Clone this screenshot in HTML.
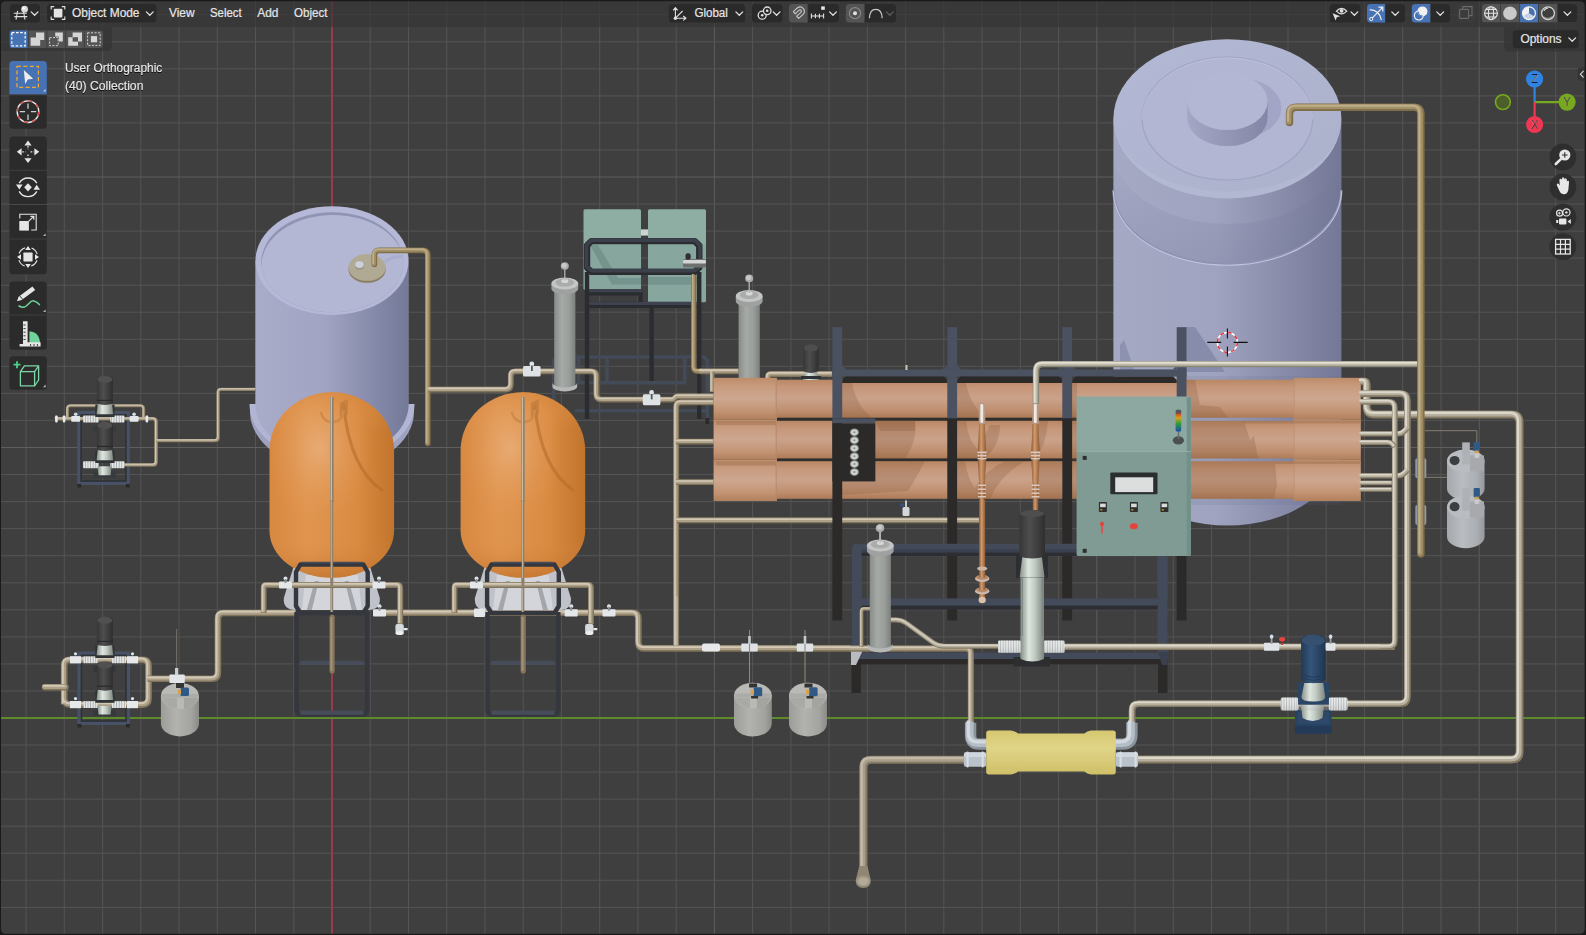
<!DOCTYPE html>
<html><head><meta charset="utf-8"><title>Blender viewport</title>
<style>
html,body{margin:0;padding:0;background:#3f3f3f;overflow:hidden}
svg{display:block}
text{font-family:"Liberation Sans",sans-serif;font-size:12px;fill:#e6e6e6;stroke:#e6e6e6;stroke-width:0.2px}
</style></head><body>
<svg width="1586" height="935" viewBox="0 0 1586 935">
<defs>
<linearGradient id="gBlueBody" x1="0" x2="1" y1="0" y2="0"><stop offset="0" stop-color="#a9acc9"/><stop offset="0.45" stop-color="#a1a4c2"/><stop offset="0.8" stop-color="#8488a8"/><stop offset="1" stop-color="#757998"/></linearGradient>
<linearGradient id="gBlueBody2" x1="0" x2="1" y1="0" y2="0"><stop offset="0" stop-color="#a5a9c4"/><stop offset="0.45" stop-color="#9fa3bf"/><stop offset="0.8" stop-color="#8488a6"/><stop offset="1" stop-color="#747896"/></linearGradient>
<linearGradient id="gBandAO" x1="0" x2="0" y1="0" y2="1"><stop offset="0" stop-color="#6a6e90" stop-opacity="0"/><stop offset="1" stop-color="#6a6e90" stop-opacity="0.22"/></linearGradient>
<linearGradient id="gBlueTop" x1="0" x2="1" y1="0" y2="1"><stop offset="0" stop-color="#b3b8d4"/><stop offset="1" stop-color="#abb0cb"/></linearGradient>
<linearGradient id="gHatchSide" x1="0" x2="1" y1="0" y2="0"><stop offset="0" stop-color="#a3a6c4"/><stop offset="0.6" stop-color="#9093b2"/><stop offset="1" stop-color="#8386a6"/></linearGradient>
<linearGradient id="gOrange" x1="0" x2="1" y1="0" y2="0"><stop offset="0" stop-color="#d88840"/><stop offset="0.3" stop-color="#e0954f"/><stop offset="0.7" stop-color="#da8b42"/><stop offset="1" stop-color="#c2742c"/></linearGradient>
<radialGradient id="gOrangeHi" cx="0.4" cy="0.3" r="0.42"><stop offset="0" stop-color="#ecb585" stop-opacity="0.7"/><stop offset="1" stop-color="#e39a56" stop-opacity="0"/></radialGradient>
<linearGradient id="gOrangeV" x1="0" x2="0" y1="0" y2="1"><stop offset="0" stop-color="#d48238" stop-opacity="0.5"/><stop offset="0.2" stop-color="#e39a56" stop-opacity="0"/><stop offset="0.8" stop-color="#d98a42" stop-opacity="0"/><stop offset="1" stop-color="#b96a24" stop-opacity="0.6"/></linearGradient>
<linearGradient id="gTube" x1="0" x2="0" y1="0" y2="1"><stop offset="0" stop-color="#b98763"/><stop offset="0.2" stop-color="#c6977a"/><stop offset="0.5" stop-color="#caa28a"/><stop offset="0.8" stop-color="#c09070"/><stop offset="1" stop-color="#ae7b58"/></linearGradient>
<linearGradient id="gTubeCap" x1="0" x2="0" y1="0" y2="1"><stop offset="0" stop-color="#bd8c68"/><stop offset="0.2" stop-color="#c89b7e"/><stop offset="0.5" stop-color="#cda790"/><stop offset="0.8" stop-color="#c39473"/><stop offset="1" stop-color="#b17f5c"/></linearGradient>
<linearGradient id="gFilter" x1="0" x2="1" y1="0" y2="0"><stop offset="0" stop-color="#888c88"/><stop offset="0.35" stop-color="#a6aaa6"/><stop offset="0.7" stop-color="#9a9e9a"/><stop offset="1" stop-color="#7c807c"/></linearGradient>
<linearGradient id="gSmallTank" x1="0" x2="1" y1="0" y2="0"><stop offset="0" stop-color="#9c9c98"/><stop offset="0.4" stop-color="#b2b2ae"/><stop offset="0.8" stop-color="#a3a39f"/><stop offset="1" stop-color="#8a8a86"/></linearGradient>
<linearGradient id="gSmallTankB" x1="0" x2="1" y1="0" y2="0"><stop offset="0" stop-color="#a4a7ac"/><stop offset="0.4" stop-color="#b9bcc1"/><stop offset="0.8" stop-color="#aaadb2"/><stop offset="1" stop-color="#94979c"/></linearGradient>
<linearGradient id="gMotor" x1="0" x2="1" y1="0" y2="0"><stop offset="0" stop-color="#363636"/><stop offset="0.4" stop-color="#4e4e4e"/><stop offset="1" stop-color="#2f2f2f"/></linearGradient>
<linearGradient id="gBlueMotor" x1="0" x2="1" y1="0" y2="0"><stop offset="0" stop-color="#223a56"/><stop offset="0.4" stop-color="#35557a"/><stop offset="1" stop-color="#1f3550"/></linearGradient>
<linearGradient id="gCone" x1="0" x2="1" y1="0" y2="0"><stop offset="0" stop-color="#868f88"/><stop offset="0.35" stop-color="#dfe6e0"/><stop offset="0.6" stop-color="#c3cbc5"/><stop offset="1" stop-color="#7c857e"/></linearGradient>
<linearGradient id="gFlex" x1="0" x2="0" y1="0" y2="1"><stop offset="0" stop-color="#f2f2f2"/><stop offset="0.5" stop-color="#d9dcdc"/><stop offset="1" stop-color="#a9adad"/></linearGradient>
<linearGradient id="gYellow" x1="0" x2="0" y1="0" y2="1"><stop offset="0" stop-color="#d6c870"/><stop offset="0.4" stop-color="#e0d488"/><stop offset="1" stop-color="#cfc068"/></linearGradient>
<linearGradient id="gCopper" x1="0" x2="1" y1="0" y2="0"><stop offset="0" stop-color="#8a5a34"/><stop offset="0.4" stop-color="#d29a6c"/><stop offset="1" stop-color="#8a5a34"/></linearGradient>
<linearGradient id="gSignal" x1="0" x2="0" y1="0" y2="1"><stop offset="0" stop-color="#c2272b"/><stop offset="0.3" stop-color="#d9a21c"/><stop offset="0.6" stop-color="#2f9a3a"/><stop offset="1" stop-color="#1c4fb0"/></linearGradient>
<pattern id="ribs" width="2.6" height="10" patternUnits="userSpaceOnUse"><rect width="2.6" height="10" fill="#e4e6e6"/><rect x="1.8" width="0.8" height="10" fill="#a4a8a8"/></pattern>
</defs>
<rect x="0.0" y="0.0" width="1586.0" height="935.0" fill="#3f3f3f"/>
<g stroke-width="1" shape-rendering="auto"><line x1="26.1" y1="0" x2="26.1" y2="935" stroke="#545454"/><line x1="64.3" y1="0" x2="64.3" y2="935" stroke="#545454"/><line x1="102.6" y1="0" x2="102.6" y2="935" stroke="#545454"/><line x1="140.8" y1="0" x2="140.8" y2="935" stroke="#545454"/><line x1="179.0" y1="0" x2="179.0" y2="935" stroke="#545454"/><line x1="217.3" y1="0" x2="217.3" y2="935" stroke="#545454"/><line x1="255.5" y1="0" x2="255.5" y2="935" stroke="#545454"/><line x1="293.8" y1="0" x2="293.8" y2="935" stroke="#545454"/><line x1="370.2" y1="0" x2="370.2" y2="935" stroke="#545454"/><line x1="408.5" y1="0" x2="408.5" y2="935" stroke="#545454"/><line x1="446.7" y1="0" x2="446.7" y2="935" stroke="#545454"/><line x1="485.0" y1="0" x2="485.0" y2="935" stroke="#545454"/><line x1="523.2" y1="0" x2="523.2" y2="935" stroke="#545454"/><line x1="561.4" y1="0" x2="561.4" y2="935" stroke="#545454"/><line x1="599.7" y1="0" x2="599.7" y2="935" stroke="#545454"/><line x1="637.9" y1="0" x2="637.9" y2="935" stroke="#545454"/><line x1="676.2" y1="0" x2="676.2" y2="935" stroke="#545454"/><line x1="714.4" y1="0" x2="714.4" y2="935" stroke="#5e5e5e"/><line x1="752.6" y1="0" x2="752.6" y2="935" stroke="#545454"/><line x1="790.9" y1="0" x2="790.9" y2="935" stroke="#545454"/><line x1="829.1" y1="0" x2="829.1" y2="935" stroke="#545454"/><line x1="867.4" y1="0" x2="867.4" y2="935" stroke="#545454"/><line x1="905.6" y1="0" x2="905.6" y2="935" stroke="#545454"/><line x1="943.8" y1="0" x2="943.8" y2="935" stroke="#545454"/><line x1="982.1" y1="0" x2="982.1" y2="935" stroke="#545454"/><line x1="1020.3" y1="0" x2="1020.3" y2="935" stroke="#545454"/><line x1="1058.6" y1="0" x2="1058.6" y2="935" stroke="#545454"/><line x1="1096.8" y1="0" x2="1096.8" y2="935" stroke="#5e5e5e"/><line x1="1135.0" y1="0" x2="1135.0" y2="935" stroke="#545454"/><line x1="1173.3" y1="0" x2="1173.3" y2="935" stroke="#545454"/><line x1="1211.5" y1="0" x2="1211.5" y2="935" stroke="#545454"/><line x1="1249.8" y1="0" x2="1249.8" y2="935" stroke="#545454"/><line x1="1288.0" y1="0" x2="1288.0" y2="935" stroke="#545454"/><line x1="1326.2" y1="0" x2="1326.2" y2="935" stroke="#545454"/><line x1="1364.5" y1="0" x2="1364.5" y2="935" stroke="#545454"/><line x1="1402.7" y1="0" x2="1402.7" y2="935" stroke="#545454"/><line x1="1441.0" y1="0" x2="1441.0" y2="935" stroke="#545454"/><line x1="1479.2" y1="0" x2="1479.2" y2="935" stroke="#5e5e5e"/><line x1="1517.4" y1="0" x2="1517.4" y2="935" stroke="#545454"/><line x1="1555.7" y1="0" x2="1555.7" y2="935" stroke="#545454"/><line x1="0" y1="934.4" x2="1586" y2="934.4" stroke="#545454"/><line x1="0" y1="907.4" x2="1586" y2="907.4" stroke="#545454"/><line x1="0" y1="880.3" x2="1586" y2="880.3" stroke="#545454"/><line x1="0" y1="853.2" x2="1586" y2="853.2" stroke="#545454"/><line x1="0" y1="826.2" x2="1586" y2="826.2" stroke="#545454"/><line x1="0" y1="799.1" x2="1586" y2="799.1" stroke="#545454"/><line x1="0" y1="772.1" x2="1586" y2="772.1" stroke="#545454"/><line x1="0" y1="745.0" x2="1586" y2="745.0" stroke="#545454"/><line x1="0" y1="691.0" x2="1586" y2="691.0" stroke="#545454"/><line x1="0" y1="663.9" x2="1586" y2="663.9" stroke="#545454"/><line x1="0" y1="636.9" x2="1586" y2="636.9" stroke="#545454"/><line x1="0" y1="609.8" x2="1586" y2="609.8" stroke="#545454"/><line x1="0" y1="582.8" x2="1586" y2="582.8" stroke="#545454"/><line x1="0" y1="555.7" x2="1586" y2="555.7" stroke="#545454"/><line x1="0" y1="528.6" x2="1586" y2="528.6" stroke="#545454"/><line x1="0" y1="501.6" x2="1586" y2="501.6" stroke="#545454"/><line x1="0" y1="474.5" x2="1586" y2="474.5" stroke="#545454"/><line x1="0" y1="447.5" x2="1586" y2="447.5" stroke="#5e5e5e"/><line x1="0" y1="420.4" x2="1586" y2="420.4" stroke="#545454"/><line x1="0" y1="393.4" x2="1586" y2="393.4" stroke="#545454"/><line x1="0" y1="366.3" x2="1586" y2="366.3" stroke="#545454"/><line x1="0" y1="339.3" x2="1586" y2="339.3" stroke="#545454"/><line x1="0" y1="312.2" x2="1586" y2="312.2" stroke="#545454"/><line x1="0" y1="285.2" x2="1586" y2="285.2" stroke="#545454"/><line x1="0" y1="258.1" x2="1586" y2="258.1" stroke="#545454"/><line x1="0" y1="231.1" x2="1586" y2="231.1" stroke="#545454"/><line x1="0" y1="204.0" x2="1586" y2="204.0" stroke="#545454"/><line x1="0" y1="177.0" x2="1586" y2="177.0" stroke="#5e5e5e"/><line x1="0" y1="149.9" x2="1586" y2="149.9" stroke="#545454"/><line x1="0" y1="122.9" x2="1586" y2="122.9" stroke="#545454"/><line x1="0" y1="95.9" x2="1586" y2="95.9" stroke="#545454"/><line x1="0" y1="68.8" x2="1586" y2="68.8" stroke="#545454"/><line x1="0" y1="41.8" x2="1586" y2="41.8" stroke="#545454"/><line x1="0" y1="14.7" x2="1586" y2="14.7" stroke="#545454"/></g>
<line x1="332" y1="0" x2="332" y2="935" stroke="#9a3b4b" stroke-width="2"/>
<line x1="0" y1="718" x2="1586" y2="718" stroke="#5f8a2c" stroke-width="2"/>
<path d="M1113.4 118.8L1113.4 446.0A114.0 79.6 0 0 0 1341.4 446.0L1341.4 118.8Z" fill="url(#gBlueBody2)"/>
<path d="M1113.4 150A114.0 74 0 0 0 1341.4 150L1341.4 190A114.0 74 0 0 1 1113.4 190Z" fill="url(#gBandAO)"/>
<path d="M1113.4 190A114.0 74 0 0 0 1341.4 190" fill="none" stroke="#8f92b1" stroke-width="2.2"/>
<path d="M1113.4 191.2A114.0 74 0 0 0 1341.4 191.2" fill="none" stroke="#c2c5df" stroke-width="1.1"/>
<ellipse cx="1227.4" cy="118.8" rx="114.0" ry="79.6" fill="url(#gBlueTop)"/>
<path d="M1113.4 118.8A114.0 79.6 0 0 0 1341.4 118.8A114.0 72.6 0 0 1 1113.4 118.8Z" fill="#b6bad6" opacity="0.6"/>
<ellipse cx="1227.4" cy="118.5" rx="85.3" ry="61.5" fill="#b2b6d2" stroke="#a0a4c0" stroke-width="1.2"/>
<path d="M1142.1000000000001 119.5A85.3 61.5 0 0 1 1312.7 119.5" fill="none" stroke="#c0c3dd" stroke-width="1" opacity="0.7"/>
<ellipse cx="1239.4" cy="108.0" rx="42.0" ry="30.0" fill="#a2a5c6"/>
<path d="M1187.2 101.5L1187.2 117.5A40.2 28.6 0 0 0 1267.6000000000001 117.5L1267.6000000000001 101.5Z" fill="url(#gHatchSide)"/>
<ellipse cx="1227.4" cy="101.5" rx="40.2" ry="28.6" fill="#b3b7d3"/>
<path d="M1186 376L1341.5 376L1341.5 505L1186 505Z" fill="#5c6088" opacity="0.12"/>
<path d="M1186 327L1195 327L1225 372L1186 372Z" fill="#5c6088" opacity="0.35"/>
<path d="M1120 345L1124 340L1135 372L1120 372Z" fill="#5c6088" opacity="0.3"/>
<path d="M250 404L250 412A82 57 0 0 0 414 412L414 404Z" fill="#9ea1c0"/>
<path d="M250 404A82 57 0 0 0 414 404L408.7 404L255.4 404Z" fill="#b1b4d2"/>
<path d="M250 404A82 57 0 0 0 414 404" fill="none" stroke="#b9bcd8" stroke-width="1"/>
<path d="M255.4 261L255.4 404A76.6 54 0 0 0 408.7 404L408.7 261Z" fill="url(#gBlueBody)"/>
<ellipse cx="332.0" cy="260.6" rx="76.5" ry="54.3" fill="#b5b8d6"/>
<clipPath id="ltopclip"><ellipse cx="332.3" cy="262.2" rx="71" ry="50"/></clipPath>
<ellipse cx="332.3" cy="262.2" rx="71.0" ry="50.0" fill="#9094b4"/>
<g clip-path="url(#ltopclip)"><ellipse cx="333" cy="265.6" rx="71.5" ry="50.6" fill="#b3b7d4"/></g>
<ellipse cx="367.1" cy="269.4" rx="18.6" ry="13.4" fill="#8a7f62"/>
<ellipse cx="367.1" cy="267.4" rx="18.6" ry="13.4" fill="#b0a994"/>
<ellipse cx="359.4" cy="266.4" rx="4.2" ry="3.4" fill="#9c9686"/>
<ellipse cx="359.4" cy="264.6" rx="4.2" ry="3.4" fill="#ccd0da"/>
<path d="M385 262Q392 256 402 257" fill="none" stroke="#a5a9cc" stroke-width="3" opacity="0.7"/>
<path d="M374.4 264.5L374.4 255.4Q374.4 250.4 379.4 250.4L422.8 250.4Q427.8 250.4 427.8 255.4L427.8 443.5" fill="none" stroke="#7f6f4a" stroke-width="5.6" stroke-linecap="round" stroke-linejoin="round"/>
<path d="M374.4 264.5L374.4 255.4Q374.4 250.4 379.4 250.4L422.8 250.4Q427.8 250.4 427.8 255.4L427.8 443.5" fill="none" stroke="#a3916a" stroke-width="3.92" stroke-linecap="round" stroke-linejoin="round" transform="translate(-0.50,-0.50)"/>
<path d="M374.4 264.5L374.4 255.4Q374.4 250.4 379.4 250.4L422.8 250.4Q427.8 250.4 427.8 255.4L427.8 443.5" fill="none" stroke="#bfae88" stroke-width="1.57" stroke-linecap="round" stroke-linejoin="round" transform="translate(-1.12,-1.12)"/>
<rect x="78.8" y="412.6" width="49.400000000000006" height="70.8" fill="none" stroke="#485267" stroke-width="3.2"/>
<rect x="81.2" y="415" width="44.60000000000001" height="66" fill="none" stroke="#2e323a" stroke-width="1.6"/>
<rect x="77.2" y="484.0" width="4.0" height="3.5" fill="#2b2a29"/>
<rect x="125.8" y="484.0" width="4.0" height="3.5" fill="#2b2a29"/>
<path d="M67.5 419.0L67.5 408.8Q67.5 405.8 70.5 405.8L140.7 405.8Q143.7 405.8 143.7 408.8L143.7 419.0" fill="none" stroke="#80745d" stroke-width="3.0" stroke-linecap="butt" stroke-linejoin="round"/>
<path d="M67.5 419.0L67.5 408.8Q67.5 405.8 70.5 405.8L140.7 405.8Q143.7 405.8 143.7 408.8L143.7 419.0" fill="none" stroke="#ada089" stroke-width="2.10" stroke-linecap="butt" stroke-linejoin="round" transform="translate(-0.27,-0.27)"/>
<path d="M67.5 419.0L67.5 408.8Q67.5 405.8 70.5 405.8L140.7 405.8Q143.7 405.8 143.7 408.8L143.7 419.0" fill="none" stroke="#d2c8b5" stroke-width="0.84" stroke-linecap="butt" stroke-linejoin="round" transform="translate(-0.60,-0.60)"/>
<path d="M55.3 418.8L153.2 418.8Q156.2 418.8 156.2 421.8L156.2 462.0Q156.2 465.0 153.2 465.0L124.0 465.0" fill="none" stroke="#80745d" stroke-width="3.6" stroke-linecap="butt" stroke-linejoin="round"/>
<path d="M55.3 418.8L153.2 418.8Q156.2 418.8 156.2 421.8L156.2 462.0Q156.2 465.0 153.2 465.0L124.0 465.0" fill="none" stroke="#ada089" stroke-width="2.52" stroke-linecap="butt" stroke-linejoin="round" transform="translate(-0.32,-0.32)"/>
<path d="M55.3 418.8L153.2 418.8Q156.2 418.8 156.2 421.8L156.2 462.0Q156.2 465.0 153.2 465.0L124.0 465.0" fill="none" stroke="#d2c8b5" stroke-width="1.01" stroke-linecap="butt" stroke-linejoin="round" transform="translate(-0.72,-0.72)"/>
<path d="M156.2 440.6L215.2 440.6Q218.2 440.6 218.2 437.6L218.2 392.4Q218.2 389.4 221.2 389.4L256.0 389.4" fill="none" stroke="#80745d" stroke-width="3.4" stroke-linecap="butt" stroke-linejoin="round"/>
<path d="M156.2 440.6L215.2 440.6Q218.2 440.6 218.2 437.6L218.2 392.4Q218.2 389.4 221.2 389.4L256.0 389.4" fill="none" stroke="#ada089" stroke-width="2.38" stroke-linecap="butt" stroke-linejoin="round" transform="translate(-0.31,-0.31)"/>
<path d="M156.2 440.6L215.2 440.6Q218.2 440.6 218.2 437.6L218.2 392.4Q218.2 389.4 221.2 389.4L256.0 389.4" fill="none" stroke="#d2c8b5" stroke-width="0.95" stroke-linecap="butt" stroke-linejoin="round" transform="translate(-0.68,-0.68)"/>
<rect x="93.6" y="426.5" width="22.5" height="5.2" fill="#383b3e"/>
<rect x="93.6" y="471.4" width="22.5" height="6.4" fill="#383b3e"/>
<rect x="83.1" y="415.4" width="15.7" height="7.0" fill="url(#ribs)" rx="1"/>
<rect x="110.3" y="415.4" width="14.2" height="7.0" fill="url(#ribs)" rx="1"/>
<rect x="83.1" y="461.3" width="15.7" height="7.0" fill="url(#ribs)" rx="1"/>
<rect x="110.3" y="461.3" width="14.2" height="7.0" fill="url(#ribs)" rx="1"/>
<rect x="55.1" y="415.4" width="2.6" height="7.0" fill="#e8eaec" rx="0.8"/>
<rect x="62.8" y="415.4" width="2.6" height="7.0" fill="#e8eaec" rx="0.8"/>
<rect x="145.6" y="415.4" width="2.6" height="7.0" fill="#e8eaec" rx="0.8"/>
<rect x="71.2" y="416.0" width="9.0" height="5.8" fill="#e3e6ea" rx="1"/>
<ellipse cx="75.7" cy="414.2" rx="1.8" ry="1.8" fill="#d5dcec"/>
<rect x="129.6" y="416.0" width="9.0" height="5.8" fill="#e3e6ea" rx="1"/>
<ellipse cx="134.1" cy="414.2" rx="1.8" ry="1.8" fill="#d5dcec"/>
<rect x="95.3" y="404.6" width="19.2" height="12.4" fill="#303336"/>
<path d="M97.7 404.3L112.10000000000001 404.3L113.2 414.3L96.60000000000001 414.3Z" fill="url(#gCone)"/>
<path d="M96.9 379.8Q96.9 375.6 104.9 375.6Q112.9 375.6 112.9 379.8L112.9 403.3Q104.9 406.8 96.9 403.3Z" fill="url(#gMotor)"/>
<ellipse cx="104.9" cy="379.4" rx="7.4" ry="3.4" fill="#505050"/>
<rect x="96.9" y="399.8" width="16.0" height="1.2" fill="#2a2a2a"/>
<rect x="95.3" y="450.6" width="19.2" height="12.4" fill="#303336"/>
<path d="M97.7 450.3L112.10000000000001 450.3L113.2 460.3L96.60000000000001 460.3Z" fill="url(#gCone)"/>
<path d="M96.9 425.8Q96.9 421.6 104.9 421.6Q112.9 421.6 112.9 425.8L112.9 449.3Q104.9 452.8 96.9 449.3Z" fill="url(#gMotor)"/>
<ellipse cx="104.9" cy="425.4" rx="7.4" ry="3.4" fill="#505050"/>
<rect x="96.9" y="445.8" width="16.0" height="1.2" fill="#2a2a2a"/>
<path d="M97.5 466.3L111.6 466.3L110.6 475.3L98.5 475.3Z" fill="url(#gCone)"/>
<rect x="79.1" y="653.1" width="49.3" height="70.3" fill="none" stroke="#485267" stroke-width="3.2"/>
<rect x="81.5" y="655.5" width="44.5" height="65.5" fill="none" stroke="#2e323a" stroke-width="1.6"/>
<rect x="77.5" y="724.0" width="4.0" height="3.5" fill="#2b2a29"/>
<rect x="126.0" y="724.0" width="4.0" height="3.5" fill="#2b2a29"/>
<path d="M64.2 704.6L64.2 665.8Q64.2 659.8 70.2 659.8L142.6 659.8Q148.6 659.8 148.6 665.8L148.6 698.6Q148.6 704.6 142.6 704.6L70.2 704.6Q64.2 704.6 64.2 698.6L64.2 690.0" fill="none" stroke="#80745d" stroke-width="6.6" stroke-linecap="butt" stroke-linejoin="round"/>
<path d="M64.2 704.6L64.2 665.8Q64.2 659.8 70.2 659.8L142.6 659.8Q148.6 659.8 148.6 665.8L148.6 698.6Q148.6 704.6 142.6 704.6L70.2 704.6Q64.2 704.6 64.2 698.6L64.2 690.0" fill="none" stroke="#ada089" stroke-width="4.62" stroke-linecap="butt" stroke-linejoin="round" transform="translate(-0.59,-0.59)"/>
<path d="M64.2 704.6L64.2 665.8Q64.2 659.8 70.2 659.8L142.6 659.8Q148.6 659.8 148.6 665.8L148.6 698.6Q148.6 704.6 142.6 704.6L70.2 704.6Q64.2 704.6 64.2 698.6L64.2 690.0" fill="none" stroke="#d2c8b5" stroke-width="1.85" stroke-linecap="butt" stroke-linejoin="round" transform="translate(-1.32,-1.32)"/>
<path d="M45.0 687.2L65.5 687.2" fill="none" stroke="#80745d" stroke-width="6.6" stroke-linecap="round" stroke-linejoin="round"/>
<path d="M45.0 687.2L65.5 687.2" fill="none" stroke="#ada089" stroke-width="4.62" stroke-linecap="round" stroke-linejoin="round" transform="translate(-0.59,-0.59)"/>
<path d="M45.0 687.2L65.5 687.2" fill="none" stroke="#d2c8b5" stroke-width="1.85" stroke-linecap="round" stroke-linejoin="round" transform="translate(-1.32,-1.32)"/>
<path d="M147.5 678.8L211.9 678.8Q217.9 678.8 217.9 672.8L217.9 619.0Q217.9 613.0 223.9 613.0L296.0 613.0" fill="none" stroke="#80745d" stroke-width="6.6" stroke-linecap="butt" stroke-linejoin="round"/>
<path d="M147.5 678.8L211.9 678.8Q217.9 678.8 217.9 672.8L217.9 619.0Q217.9 613.0 223.9 613.0L296.0 613.0" fill="none" stroke="#ada089" stroke-width="4.62" stroke-linecap="butt" stroke-linejoin="round" transform="translate(-0.59,-0.59)"/>
<path d="M147.5 678.8L211.9 678.8Q217.9 678.8 217.9 672.8L217.9 619.0Q217.9 613.0 223.9 613.0L296.0 613.0" fill="none" stroke="#d2c8b5" stroke-width="1.85" stroke-linecap="butt" stroke-linejoin="round" transform="translate(-1.32,-1.32)"/>
<rect x="93.5" y="665.5" width="22.0" height="6.5" fill="#33373c"/>
<rect x="93.5" y="710.5" width="22.0" height="5.0" fill="#33373c"/>
<rect x="83.5" y="656.4" width="14.0" height="6.8" fill="url(#ribs)"/>
<rect x="112.0" y="656.4" width="14.0" height="6.8" fill="url(#ribs)"/>
<rect x="70.0" y="656.2" width="11.0" height="7.2" fill="#e6e8ea"/>
<rect x="127.0" y="656.2" width="11.0" height="7.2" fill="#e6e8ea"/>
<ellipse cx="75.5" cy="653.8" rx="1.6" ry="1.6" fill="#dfe3ea"/>
<ellipse cx="132.5" cy="653.8" rx="1.6" ry="1.6" fill="#dfe3ea"/>
<rect x="83.5" y="701.2" width="14.0" height="6.8" fill="url(#ribs)"/>
<rect x="112.0" y="701.2" width="14.0" height="6.8" fill="url(#ribs)"/>
<rect x="70.0" y="701.0" width="11.0" height="7.2" fill="#e6e8ea"/>
<rect x="127.0" y="701.0" width="11.0" height="7.2" fill="#e6e8ea"/>
<ellipse cx="75.5" cy="698.6" rx="1.6" ry="1.6" fill="#dfe3ea"/>
<ellipse cx="132.5" cy="698.6" rx="1.6" ry="1.6" fill="#dfe3ea"/>
<rect x="95.3" y="645.6" width="19.2" height="12.4" fill="#303336"/>
<path d="M97.7 645.3L112.10000000000001 645.3L113.2 655.3L96.60000000000001 655.3Z" fill="url(#gCone)"/>
<path d="M96.9 620.8Q96.9 616.5999999999999 104.9 616.5999999999999Q112.9 616.5999999999999 112.9 620.8L112.9 644.3Q104.9 647.8 96.9 644.3Z" fill="url(#gMotor)"/>
<ellipse cx="104.9" cy="620.4" rx="7.4" ry="3.4" fill="#505050"/>
<rect x="96.9" y="640.8" width="16.0" height="1.2" fill="#2a2a2a"/>
<rect x="95.3" y="690.4" width="19.2" height="12.4" fill="#303336"/>
<path d="M97.7 690.1L112.10000000000001 690.1L113.2 700.1L96.60000000000001 700.1Z" fill="url(#gCone)"/>
<path d="M96.9 665.6Q96.9 661.4 104.9 661.4Q112.9 661.4 112.9 665.6L112.9 689.1Q104.9 692.6 96.9 689.1Z" fill="url(#gMotor)"/>
<ellipse cx="104.9" cy="665.2" rx="7.4" ry="3.4" fill="#505050"/>
<rect x="96.9" y="685.6" width="16.0" height="1.2" fill="#2a2a2a"/>
<path d="M97.5 706L111.6 706L110.6 714.5L98.5 714.5Z" fill="url(#gCone)"/>
<path d="M160.9 695.954L160.9 723.446A19.049999999999997 12.953999999999999 0 0 0 199 723.446L199 695.954Z" fill="url(#gSmallTank)"/>
<ellipse cx="179.9" cy="696.0" rx="19.0" ry="13.0" fill="#b9b9b5"/>
<path d="M161.4 695.954A19.049999999999997 12.953999999999999 0 0 0 176.95 708.6080000000001L176.95 697.954L162.9 697.954Z" fill="#a9a9a5"/>
<path d="M183.95 697.8971L198 697.8971A19.049999999999997 12.953999999999999 0 0 1 183.95 708.908Z" fill="#9f9f9b" opacity="0.8"/>
<path d="M161.9 693.954L198 693.954L198 697.454L161.9 697.454Z" fill="#a5a5a1" opacity="0.7"/>
<line x1="176.6" y1="629" x2="176.6" y2="674" stroke="#77706a" stroke-width="1"/>
<rect x="169.4" y="674.5" width="15.4" height="8.5" fill="#e2e5e7" rx="1"/>
<rect x="175.0" y="668.0" width="3.2" height="7.0" fill="#c9ced2"/>
<rect x="176.0" y="683.0" width="8.0" height="5.0" fill="#333"/>
<rect x="180.5" y="687.5" width="8.5" height="8.5" fill="#2f5a86" rx="1.5"/>
<rect x="178.0" y="689.5" width="3.0" height="4.5" fill="#d9a24a"/>
<rect x="583.5" y="209.2" width="57.5" height="80.5" fill="#8eaea4" rx="1.5"/>
<rect x="648.0" y="209.2" width="58.0" height="93.0" fill="#8eaea4" rx="1.5"/>
<rect x="641.0" y="229.4" width="7.0" height="6.2" fill="#cfd2d0"/>
<path d="M590 245L598 245L618 278L641.2 278L641.2 284.5L612 284.5Z" fill="#5f8079" opacity="0.5"/>
<path d="M648 277L697 277L697 284.7L648 284.7Z" fill="#5f8079" opacity="0.5"/>
<path d="M589 244.3L641.2 244.3L641.2 289.2L589 289.2Z M648 244.3L705.8 244.3L705.8 302L648 302Z" fill="#6d8f87" opacity="0.22"/>
<g fill="none" stroke="#434a58" stroke-width="3.6" stroke-linejoin="round">
<path d="M553.8 414L553.8 360L557 357L704 357L707.2 360L707.2 420"/>
<path d="M578.5 357L578.5 382.7L684.7 382.7L684.7 357"/>
<path d="M607 357L607 382.7"/>
<path d="M575 410.8L707 410.8"/>
</g>
<rect x="705.4" y="418.0" width="3.8" height="6.0" fill="#2b2a29"/>
<g fill="none" stroke="#2b2c30" stroke-width="4.4" stroke-linejoin="round">
<path d="M587 419L587 272M699.2 419L699.2 272"/>
<path d="M640.5 292.4L640.5 305"/>
<path d="M651.6 306L651.6 381"/>
</g>
<g fill="none" stroke="#2b2c30" stroke-width="6.4" stroke-linejoin="round">
<path d="M589 292.4L642.6 292.4"/>
<path d="M589 304.9L697 304.9"/>
</g>
<g fill="none" stroke="#3d424e" stroke-width="3">
<path d="M589 290.7L642.6 290.7"/>
<path d="M589 303.4L697 303.4"/>
</g>
<path d="M591.5 241.1L694.7 241.1L699.3 245.6L699.3 267.4L694.7 271.9L591.5 271.9L587 267.4L587 245.6Z" fill="none" stroke="#2b2c30" stroke-width="6.4" stroke-linejoin="round"/>
<path d="M591.5 240.1L694.7 240.1L700 245.4L700 266.8L694.7 270.6L591.5 270.6L586.4 266.8L586.4 245.4Z" fill="none" stroke="#3b404b" stroke-width="3.6" stroke-linejoin="round"/>
<path d="M693.8 275.0L693.8 367.2Q693.8 371.3 697.9 371.3L702.0 371.3" fill="none" stroke="#7a6a48" stroke-width="5.4" stroke-linecap="butt" stroke-linejoin="round"/>
<path d="M693.8 275.0L693.8 367.2Q693.8 371.3 697.9 371.3L702.0 371.3" fill="none" stroke="#a08d66" stroke-width="3.78" stroke-linecap="butt" stroke-linejoin="round" transform="translate(-0.49,-0.49)"/>
<path d="M693.8 275.0L693.8 367.2Q693.8 371.3 697.9 371.3L702.0 371.3" fill="none" stroke="#bdac86" stroke-width="1.51" stroke-linecap="butt" stroke-linejoin="round" transform="translate(-1.08,-1.08)"/>
<rect x="683.0" y="259.0" width="23.0" height="8.4" fill="#6e706f" rx="1.5"/>
<rect x="683.0" y="260.0" width="23.0" height="3.6" fill="#d4d5d5" rx="1"/>
<rect x="685.5" y="253.3" width="5.2" height="6.4" fill="#2e2f33" rx="2.2"/>
<path d="M428.6 389.5L505.8 389.5Q510.8 389.5 510.8 384.5L510.8 376.3Q510.8 371.3 515.8 371.3L591.4 371.3Q596.4 371.3 596.4 376.3L596.4 394.6Q596.4 399.6 601.4 399.6L672.1 399.6Q674.0 399.6 675.0 398.0L675.0 398.0Q676.0 396.4 677.9 396.4L714.0 396.4" fill="none" stroke="#80745d" stroke-width="5.8" stroke-linecap="butt" stroke-linejoin="round"/>
<path d="M428.6 389.5L505.8 389.5Q510.8 389.5 510.8 384.5L510.8 376.3Q510.8 371.3 515.8 371.3L591.4 371.3Q596.4 371.3 596.4 376.3L596.4 394.6Q596.4 399.6 601.4 399.6L672.1 399.6Q674.0 399.6 675.0 398.0L675.0 398.0Q676.0 396.4 677.9 396.4L714.0 396.4" fill="none" stroke="#ada089" stroke-width="4.06" stroke-linecap="butt" stroke-linejoin="round" transform="translate(-0.52,-0.52)"/>
<path d="M428.6 389.5L505.8 389.5Q510.8 389.5 510.8 384.5L510.8 376.3Q510.8 371.3 515.8 371.3L591.4 371.3Q596.4 371.3 596.4 376.3L596.4 394.6Q596.4 399.6 601.4 399.6L672.1 399.6Q674.0 399.6 675.0 398.0L675.0 398.0Q676.0 396.4 677.9 396.4L714.0 396.4" fill="none" stroke="#d2c8b5" stroke-width="1.62" stroke-linecap="butt" stroke-linejoin="round" transform="translate(-1.16,-1.16)"/>
<path d="M700.0 371.3L739.0 371.3" fill="none" stroke="#80745d" stroke-width="5.8" stroke-linecap="butt" stroke-linejoin="round"/>
<path d="M700.0 371.3L739.0 371.3" fill="none" stroke="#ada089" stroke-width="4.06" stroke-linecap="butt" stroke-linejoin="round" transform="translate(-0.52,-0.52)"/>
<path d="M700.0 371.3L739.0 371.3" fill="none" stroke="#d2c8b5" stroke-width="1.62" stroke-linecap="butt" stroke-linejoin="round" transform="translate(-1.16,-1.16)"/>
<path d="M712.0 372.0L712.0 392.0" fill="none" stroke="#80745d" stroke-width="4.6" stroke-linecap="butt" stroke-linejoin="round"/>
<path d="M712.0 372.0L712.0 392.0" fill="none" stroke="#ada089" stroke-width="3.22" stroke-linecap="butt" stroke-linejoin="round" transform="translate(-0.41,-0.41)"/>
<path d="M712.0 372.0L712.0 392.0" fill="none" stroke="#d2c8b5" stroke-width="1.29" stroke-linecap="butt" stroke-linejoin="round" transform="translate(-0.92,-0.92)"/>
<path d="M768.0 381.0L768.0 377.5Q768.0 374.0 771.5 374.0L832.5 374.0" fill="none" stroke="#80745d" stroke-width="5.8" stroke-linecap="butt" stroke-linejoin="round"/>
<path d="M768.0 381.0L768.0 377.5Q768.0 374.0 771.5 374.0L832.5 374.0" fill="none" stroke="#ada089" stroke-width="4.06" stroke-linecap="butt" stroke-linejoin="round" transform="translate(-0.52,-0.52)"/>
<path d="M768.0 381.0L768.0 377.5Q768.0 374.0 771.5 374.0L832.5 374.0" fill="none" stroke="#d2c8b5" stroke-width="1.62" stroke-linecap="butt" stroke-linejoin="round" transform="translate(-1.16,-1.16)"/>
<rect x="523.0" y="366.0" width="17.6" height="10.6" fill="#dfe2e5" rx="1.5"/>
<ellipse cx="531.8" cy="364.0" rx="2.4" ry="2.4" fill="#dfe3ea"/>
<rect x="531.0" y="365.6" width="1.8" height="5.4" fill="#55595f"/>
<rect x="642.8" y="394.2" width="17.6" height="11.0" fill="#dfe2e5" rx="1.5"/>
<ellipse cx="651.6" cy="392.4" rx="2.4" ry="2.4" fill="#dfe3ea"/>
<rect x="650.8" y="394.0" width="1.8" height="5.4" fill="#55595f"/>
<path d="M554.1999999999999 284.6L554.1999999999999 386.5A10.6 4 0 0 0 575.4 386.5L575.4 284.6Z" fill="url(#gFilter)"/>
<path d="M552.4 382.5A12.4 5 0 0 0 577.1999999999999 382.5L577.1999999999999 386.5A12.4 5 0 0 1 552.4 386.5Z" fill="#b5b8b6"/>
<path d="M551.4 283.6L551.4 288.6A13.4 6 0 0 0 578.1999999999999 288.6L578.1999999999999 283.6Z" fill="#9ea19f"/>
<ellipse cx="564.8" cy="283.6" rx="13.4" ry="6.0" fill="#c3c6c4"/>
<ellipse cx="564.8" cy="282.6" rx="9.4" ry="4.0" fill="#a9acaa"/>
<ellipse cx="564.8" cy="281.1" rx="3.5" ry="2.0" fill="#d5d8d6"/>
<line x1="564.8" y1="269.6" x2="564.8" y2="280.6" stroke="#b9bcba" stroke-width="1.2"/>
<ellipse cx="564.8" cy="266.1" rx="4.0" ry="3.8" fill="#a9acaa"/>
<ellipse cx="564.2" cy="265.4" rx="2.6" ry="2.4" fill="#c6c9c7"/>
<path d="M738.6 296.9L738.6 382A10.6 4 0 0 0 759.8000000000001 382L759.8000000000001 296.9Z" fill="url(#gFilter)"/>
<path d="M735.8000000000001 295.9L735.8000000000001 300.9A13.4 6 0 0 0 762.6 300.9L762.6 295.9Z" fill="#9ea19f"/>
<ellipse cx="749.2" cy="295.9" rx="13.4" ry="6.0" fill="#c3c6c4"/>
<ellipse cx="749.2" cy="294.9" rx="9.4" ry="4.0" fill="#a9acaa"/>
<ellipse cx="749.2" cy="293.4" rx="3.5" ry="2.0" fill="#d5d8d6"/>
<line x1="749.2" y1="281.9" x2="749.2" y2="292.9" stroke="#b9bcba" stroke-width="1.2"/>
<ellipse cx="749.2" cy="278.4" rx="4.0" ry="3.8" fill="#a9acaa"/>
<ellipse cx="748.6" cy="277.7" rx="2.6" ry="2.4" fill="#c6c9c7"/>
<path d="M714.0 402.4L681.2 402.4Q676.2 402.4 676.2 407.4L676.2 647.0" fill="none" stroke="#80745d" stroke-width="5.8" stroke-linecap="butt" stroke-linejoin="round"/>
<path d="M714.0 402.4L681.2 402.4Q676.2 402.4 676.2 407.4L676.2 647.0" fill="none" stroke="#ada089" stroke-width="4.06" stroke-linecap="butt" stroke-linejoin="round" transform="translate(-0.52,-0.52)"/>
<path d="M714.0 402.4L681.2 402.4Q676.2 402.4 676.2 407.4L676.2 647.0" fill="none" stroke="#d2c8b5" stroke-width="1.62" stroke-linecap="butt" stroke-linejoin="round" transform="translate(-1.16,-1.16)"/>
<path d="M676.2 441.6L714.0 441.6" fill="none" stroke="#80745d" stroke-width="5.8" stroke-linecap="butt" stroke-linejoin="round"/>
<path d="M676.2 441.6L714.0 441.6" fill="none" stroke="#ada089" stroke-width="4.06" stroke-linecap="butt" stroke-linejoin="round" transform="translate(-0.52,-0.52)"/>
<path d="M676.2 441.6L714.0 441.6" fill="none" stroke="#d2c8b5" stroke-width="1.62" stroke-linecap="butt" stroke-linejoin="round" transform="translate(-1.16,-1.16)"/>
<path d="M676.2 482.2L714.0 482.2" fill="none" stroke="#80745d" stroke-width="5.8" stroke-linecap="butt" stroke-linejoin="round"/>
<path d="M676.2 482.2L714.0 482.2" fill="none" stroke="#ada089" stroke-width="4.06" stroke-linecap="butt" stroke-linejoin="round" transform="translate(-0.52,-0.52)"/>
<path d="M676.2 482.2L714.0 482.2" fill="none" stroke="#d2c8b5" stroke-width="1.62" stroke-linecap="butt" stroke-linejoin="round" transform="translate(-1.16,-1.16)"/>
<path d="M677.0 520.4L980.0 520.4" fill="none" stroke="#80745d" stroke-width="5.8" stroke-linecap="butt" stroke-linejoin="round"/>
<path d="M677.0 520.4L980.0 520.4" fill="none" stroke="#ada089" stroke-width="4.06" stroke-linecap="butt" stroke-linejoin="round" transform="translate(-0.52,-0.52)"/>
<path d="M677.0 520.4L980.0 520.4" fill="none" stroke="#d2c8b5" stroke-width="1.62" stroke-linecap="butt" stroke-linejoin="round" transform="translate(-1.16,-1.16)"/>
<rect x="776.9" y="416.0" width="299.1" height="47.0" fill="#2f2e2e"/>
<rect x="776.9" y="379.7" width="517.1" height="38.0" fill="url(#gTube)"/>
<rect x="776.9" y="420.8" width="517.1" height="37.6" fill="url(#gTube)"/>
<rect x="776.9" y="461.2" width="517.1" height="37.6" fill="url(#gTube)"/>
<rect x="713.6" y="377.8" width="63.3" height="41.6" fill="url(#gTubeCap)"/>
<rect x="1293.6" y="377.8" width="67.2" height="41.6" fill="url(#gTubeCap)"/>
<rect x="775.4" y="377.8" width="1.5" height="41.6" fill="#b58a6c" opacity="0.6"/>
<rect x="1293.6" y="377.8" width="1.2" height="41.6" fill="#b58a6c" opacity="0.5"/>
<rect x="713.6" y="419.4" width="63.3" height="40.4" fill="url(#gTubeCap)"/>
<rect x="1293.6" y="419.4" width="67.2" height="40.4" fill="url(#gTubeCap)"/>
<rect x="775.4" y="419.4" width="1.5" height="40.4" fill="#b58a6c" opacity="0.6"/>
<rect x="1293.6" y="419.4" width="1.2" height="40.4" fill="#b58a6c" opacity="0.5"/>
<rect x="713.6" y="459.8" width="63.3" height="41.2" fill="url(#gTubeCap)"/>
<rect x="1293.6" y="459.8" width="67.2" height="41.2" fill="url(#gTubeCap)"/>
<rect x="775.4" y="459.8" width="1.5" height="41.2" fill="#b58a6c" opacity="0.6"/>
<rect x="1293.6" y="459.8" width="1.2" height="41.2" fill="#b58a6c" opacity="0.5"/>
<path d="M842 383L852 383Q856 405 872 417.7L842 417.7Z" fill="#7c5238" opacity="0.24"/>
<path d="M957 383L966 383Q970 405 986 417.7L957 417.7Z" fill="#7c5238" opacity="0.24"/>
<path d="M875.5 420.8L915 420.8L915 431L880 431Z" fill="#7c5238" opacity="0.24"/>
<path d="M875.5 420.8L915 420.8Q918 440 905 458.4L875.5 458.4Z" fill="#7c5238" opacity="0.24"/>
<path d="M842 481.5L875.5 481.5L875.5 461.2L925 461.2Q915 480 908 491L842 495Z" fill="#7c5238" opacity="0.24"/>
<path d="M957 420.8L966 420.8Q968 440 978 450L990 425L1000 425Q1000 445 985 458.4L957 458.4Z" fill="#7c5238" opacity="0.24"/>
<path d="M957 461.2L965 461.2Q968 480 975 488Q985 470 1005 461.2L1025 461.2Q1000 475 990 498.8L957 498.8Z" fill="#7c5238" opacity="0.24"/>
<path d="M1040 420.8L1048 420.8Q1046 445 1036 458.4L1030 458.4Z" fill="#7c5238" opacity="0.24"/>
<path d="M1040 461.2L1062 461.2L1062 498.8L1036 498.8Z" fill="#7c5238" opacity="0.24"/>
<path d="M1072 383L1077 383L1077 498.8L1072 498.8Z" fill="#7c5238" opacity="0.24"/>
<path d="M1186 379.7L1195 379.7L1200 405L1220 407L1228 417.7L1186 417.7Z" fill="#7c5238" opacity="0.24"/>
<path d="M1191 420.8L1244 420.8L1250 440L1254 436L1258 458.4L1191 458.4Z" fill="#7c5238" opacity="0.24"/>
<path d="M1191 461.2L1275 461.2L1277 485L1274 498.8L1191 498.8Z" fill="#7c5238" opacity="0.24"/>
<path d="M1244 420.8L1360 420.8L1360 423.5L1244 423.5Z M1275 461.2L1360 461.2L1360 464L1275 464Z" fill="#7c5238" opacity="0.24"/>
<path d="M716 421L776 421L776 425L716 425Z M716 461.5L776 461.5L776 465.5L716 465.5Z" fill="#7c5238" opacity="0.24"/>
<rect x="832.4" y="327.2" width="9.8" height="91.3" fill="#4a5161"/>
<rect x="947.3" y="327.2" width="9.8" height="91.3" fill="#4a5161"/>
<rect x="1062.3" y="327.2" width="9.8" height="91.3" fill="#4a5161"/>
<rect x="1176.7" y="327.2" width="9.8" height="91.3" fill="#4a5161"/>
<rect x="832.4" y="369.4" width="354.1" height="7.2" fill="#4a5161"/>
<path d="M842.1999999999999 380L845.6999999999999 376.5L943.8 376.5L947.3 380L947.3 383L842.1999999999999 383Z" fill="#2b2a29"/>
<path d="M957.0999999999999 380L960.5999999999999 376.5L1058.8 376.5L1062.3 380L1062.3 383L957.0999999999999 383Z" fill="#2b2a29"/>
<path d="M1072.1 380L1075.6 376.5L1173.2 376.5L1176.7 380L1176.7 383L1072.1 383Z" fill="#2b2a29"/>
<path d="M842.1999999999999 365.5L846.1999999999999 369.5L842.1999999999999 369.5Z" fill="#4a5161"/>
<path d="M957.0999999999999 365.5L961.0999999999999 369.5L957.0999999999999 369.5Z" fill="#4a5161"/>
<path d="M1072.1 365.5L1076.1 369.5L1072.1 369.5Z" fill="#4a5161"/>
<path d="M947.3 365.5L943.3 369.5L947.3 369.5Z" fill="#4a5161"/>
<path d="M1062.3 365.5L1058.3 369.5L1062.3 369.5Z" fill="#4a5161"/>
<path d="M1176.7 365.5L1172.7 369.5L1176.7 369.5Z" fill="#4a5161"/>
<rect x="832.4" y="418.5" width="9.8" height="202.0" fill="#2b2a29"/>
<rect x="947.3" y="418.5" width="9.8" height="202.0" fill="#2b2a29"/>
<rect x="1062.3" y="418.5" width="9.8" height="202.0" fill="#2b2a29"/>
<rect x="1176.7" y="418.5" width="9.8" height="202.0" fill="#2b2a29"/>
<rect x="832.4" y="418.4" width="43.0" height="5.0" fill="#4a5161"/>
<rect x="832.4" y="423.3" width="43.0" height="58.2" fill="#2b2a29"/>
<ellipse cx="854.4" cy="432.3" rx="4.5" ry="3.9" fill="#8f9492"/>
<ellipse cx="854.4" cy="432.3" rx="3.3" ry="2.8" fill="#cfd3d1"/>
<ellipse cx="854.4" cy="432.3" rx="1.2" ry="1.0" fill="#8f9492"/>
<ellipse cx="854.4" cy="440.2" rx="4.5" ry="3.9" fill="#8f9492"/>
<ellipse cx="854.4" cy="440.2" rx="3.3" ry="2.8" fill="#cfd3d1"/>
<ellipse cx="854.4" cy="440.2" rx="1.2" ry="1.0" fill="#8f9492"/>
<ellipse cx="854.4" cy="448.2" rx="4.5" ry="3.9" fill="#8f9492"/>
<ellipse cx="854.4" cy="448.2" rx="3.3" ry="2.8" fill="#cfd3d1"/>
<ellipse cx="854.4" cy="448.2" rx="1.2" ry="1.0" fill="#8f9492"/>
<ellipse cx="854.4" cy="456.2" rx="4.5" ry="3.9" fill="#8f9492"/>
<ellipse cx="854.4" cy="456.2" rx="3.3" ry="2.8" fill="#cfd3d1"/>
<ellipse cx="854.4" cy="456.2" rx="1.2" ry="1.0" fill="#8f9492"/>
<ellipse cx="854.4" cy="464.1" rx="4.5" ry="3.9" fill="#8f9492"/>
<ellipse cx="854.4" cy="464.1" rx="3.3" ry="2.8" fill="#cfd3d1"/>
<ellipse cx="854.4" cy="464.1" rx="1.2" ry="1.0" fill="#8f9492"/>
<ellipse cx="854.4" cy="472.1" rx="4.5" ry="3.9" fill="#8f9492"/>
<ellipse cx="854.4" cy="472.1" rx="3.3" ry="2.8" fill="#cfd3d1"/>
<ellipse cx="854.4" cy="472.1" rx="1.2" ry="1.0" fill="#8f9492"/>
<path d="M805 372L817 372L819 380L803 380Z" fill="url(#gCone)"/>
<path d="M803.2 348.4Q803.2 344.4 810.95 344.4Q818.7 344.4 818.7 348.4L818.7 371Q810.95 375 803.2 371Z" fill="url(#gMotor)"/>
<ellipse cx="811.0" cy="348.0" rx="7.2" ry="3.4" fill="#4e4e4e"/>
<rect x="801.0" y="376.0" width="20.0" height="3.0" fill="#2e3236"/>
<rect x="902.5" y="507.0" width="7.0" height="9.0" fill="#d3d7da" rx="1.5"/>
<rect x="905.0" y="500.5" width="2.0" height="7.0" fill="#c5c9cc"/>
<rect x="900.0" y="503.5" width="4.0" height="3.0" fill="#35507a"/>
<line x1="879.8" y1="531" x2="879.8" y2="541" stroke="#b9bcba" stroke-width="1.2"/>
<ellipse cx="879.8" cy="528.3" rx="4.0" ry="3.8" fill="#a9acaa"/>
<ellipse cx="879.2" cy="527.6" rx="2.6" ry="2.4" fill="#c6c9c7"/>
<rect x="905.5" y="365.0" width="2.0" height="5.0" fill="#c9c3b0"/>
<path d="M375.0 612.8L632.4 612.8Q638.4 612.8 638.4 618.8L638.4 642.4Q638.4 648.4 644.4 648.4L851.0 648.4" fill="none" stroke="#80745d" stroke-width="6.6" stroke-linecap="butt" stroke-linejoin="round"/>
<path d="M375.0 612.8L632.4 612.8Q638.4 612.8 638.4 618.8L638.4 642.4Q638.4 648.4 644.4 648.4L851.0 648.4" fill="none" stroke="#ada089" stroke-width="4.62" stroke-linecap="butt" stroke-linejoin="round" transform="translate(-0.59,-0.59)"/>
<path d="M375.0 612.8L632.4 612.8Q638.4 612.8 638.4 618.8L638.4 642.4Q638.4 648.4 644.4 648.4L851.0 648.4" fill="none" stroke="#d2c8b5" stroke-width="1.85" stroke-linecap="butt" stroke-linejoin="round" transform="translate(-1.32,-1.32)"/>
<path d="M293.8 566L369.8 566L379.8 598Q380.8 610 367.8 610L295.8 610Q282.8 610 283.8 598Z" fill="#c0c2c9"/>
<path d="M305.8 575L357.8 575L361.8 610L301.8 610Z" fill="#d3d5da"/>
<path d="M314.8 581L318.8 581L311.8 610L306.8 610Z" fill="#a3a5ad"/>
<path d="M344.8 581L348.8 581L356.8 610L351.8 610Z" fill="#a3a5ad"/>
<g fill="none" stroke="#34373e" stroke-width="4.4" stroke-linejoin="round">
<path d="M296.5 612L296.5 711L299.3 714.5L364.40000000000003 714.5L367.20000000000005 711L367.20000000000005 612"/>
</g>
<rect x="300.3" y="660.8" width="63.1" height="4.2" fill="#474c5a"/>
<rect x="300.3" y="710.6" width="63.1" height="4.2" fill="#474c5a"/>
<path d="M269.5 450.6A62.3 58.4 0 0 1 394.1 450.6L394.1 530.7A62.3 47.1 0 0 1 269.5 530.7Z" fill="url(#gOrange)"/>
<path d="M269.5 450.6A62.3 58.4 0 0 1 394.1 450.6L394.1 530.7A62.3 47.1 0 0 1 269.5 530.7Z" fill="url(#gOrangeV)"/>
<path d="M269.5 450.6A62.3 58.4 0 0 1 394.1 450.6L394.1 530.7A62.3 47.1 0 0 1 269.5 530.7Z" fill="url(#gOrangeHi)"/>
<path d="M343.8 406Q349.8 468 381.8 490" fill="none" stroke="#b0692a" stroke-width="3" opacity="0.55" stroke-linecap="round"/>
<path d="M339.8 403L347.8 399L347.8 414L339.8 420Z" fill="#c27a38" opacity="0.7"/>
<path d="M320.8 412Q322.8 422 332.8 422Q342.8 422 343.8 410" fill="none" stroke="#cf8a4c" stroke-width="2.5"/>
<path d="M300.3 564.5L363.40000000000003 564.5L367.70000000000005 572L367.70000000000005 606L363.40000000000003 613L300.3 613L296.0 606L296.0 572Z" fill="none" stroke="#34373e" stroke-width="4.4" stroke-linejoin="round"/>
<path d="M302.3 562.6L361.40000000000003 562.6" stroke="#454a57" stroke-width="1.6"/>
<line x1="331.8" y1="397" x2="331.8" y2="502" stroke="#8c806c" stroke-width="3.6"/>
<line x1="331.3" y1="397" x2="331.3" y2="500" stroke="#c4baa6" stroke-width="1.4"/>
<line x1="331.8" y1="500" x2="331.8" y2="612" stroke="#8c806c" stroke-width="2.8"/>
<line x1="331.40000000000003" y1="500" x2="331.40000000000003" y2="612" stroke="#b8ae9a" stroke-width="1"/>
<line x1="332.1" y1="617" x2="332.1" y2="671" stroke="#85745a" stroke-width="5.2" stroke-linecap="round"/>
<line x1="331.40000000000003" y1="617" x2="331.40000000000003" y2="671" stroke="#a3927a" stroke-width="2"/>
<path d="M484.9 566L560.9 566L570.9 598Q571.9 610 558.9 610L486.9 610Q473.9 610 474.9 598Z" fill="#c0c2c9"/>
<path d="M496.9 575L548.9 575L552.9 610L492.9 610Z" fill="#d3d5da"/>
<path d="M505.9 581L509.9 581L502.9 610L497.9 610Z" fill="#a3a5ad"/>
<path d="M535.9 581L539.9 581L547.9 610L542.9 610Z" fill="#a3a5ad"/>
<g fill="none" stroke="#34373e" stroke-width="4.4" stroke-linejoin="round">
<path d="M487.59999999999997 612L487.59999999999997 711L490.4 714.5L555.5 714.5L558.3 711L558.3 612"/>
</g>
<rect x="491.4" y="660.8" width="63.1" height="4.2" fill="#474c5a"/>
<rect x="491.4" y="710.6" width="63.1" height="4.2" fill="#474c5a"/>
<path d="M460.59999999999997 450.6A62.3 58.4 0 0 1 585.1999999999999 450.6L585.1999999999999 530.7A62.3 47.1 0 0 1 460.59999999999997 530.7Z" fill="url(#gOrange)"/>
<path d="M460.59999999999997 450.6A62.3 58.4 0 0 1 585.1999999999999 450.6L585.1999999999999 530.7A62.3 47.1 0 0 1 460.59999999999997 530.7Z" fill="url(#gOrangeV)"/>
<path d="M460.59999999999997 450.6A62.3 58.4 0 0 1 585.1999999999999 450.6L585.1999999999999 530.7A62.3 47.1 0 0 1 460.59999999999997 530.7Z" fill="url(#gOrangeHi)"/>
<path d="M534.9 406Q540.9 468 572.9 490" fill="none" stroke="#b0692a" stroke-width="3" opacity="0.55" stroke-linecap="round"/>
<path d="M530.9 403L538.9 399L538.9 414L530.9 420Z" fill="#c27a38" opacity="0.7"/>
<path d="M511.9 412Q513.9 422 523.9 422Q533.9 422 534.9 410" fill="none" stroke="#cf8a4c" stroke-width="2.5"/>
<path d="M491.4 564.5L554.5 564.5L558.8 572L558.8 606L554.5 613L491.4 613L487.09999999999997 606L487.09999999999997 572Z" fill="none" stroke="#34373e" stroke-width="4.4" stroke-linejoin="round"/>
<path d="M493.4 562.6L552.5 562.6" stroke="#454a57" stroke-width="1.6"/>
<line x1="522.9" y1="397" x2="522.9" y2="502" stroke="#8c806c" stroke-width="3.6"/>
<line x1="522.4" y1="397" x2="522.4" y2="500" stroke="#c4baa6" stroke-width="1.4"/>
<line x1="522.9" y1="500" x2="522.9" y2="612" stroke="#8c806c" stroke-width="2.8"/>
<line x1="522.5" y1="500" x2="522.5" y2="612" stroke="#b8ae9a" stroke-width="1"/>
<line x1="523.1999999999999" y1="617" x2="523.1999999999999" y2="671" stroke="#85745a" stroke-width="5.2" stroke-linecap="round"/>
<line x1="522.5" y1="617" x2="522.5" y2="671" stroke="#a3927a" stroke-width="2"/>
<path d="M263.7 613.0L263.7 588.0Q263.7 585.0 266.7 585.0L397.3 585.0Q400.3 585.0 400.3 588.0L400.3 624.0" fill="none" stroke="#80745d" stroke-width="5.8" stroke-linecap="butt" stroke-linejoin="round"/>
<path d="M263.7 613.0L263.7 588.0Q263.7 585.0 266.7 585.0L397.3 585.0Q400.3 585.0 400.3 588.0L400.3 624.0" fill="none" stroke="#ada089" stroke-width="4.06" stroke-linecap="butt" stroke-linejoin="round" transform="translate(-0.52,-0.52)"/>
<path d="M263.7 613.0L263.7 588.0Q263.7 585.0 266.7 585.0L397.3 585.0Q400.3 585.0 400.3 588.0L400.3 624.0" fill="none" stroke="#d2c8b5" stroke-width="1.62" stroke-linecap="butt" stroke-linejoin="round" transform="translate(-1.16,-1.16)"/>
<path d="M454.5 613.0L454.5 588.0Q454.5 585.0 457.5 585.0L588.0 585.0Q591.0 585.0 591.0 588.0L591.0 624.0" fill="none" stroke="#80745d" stroke-width="5.8" stroke-linecap="butt" stroke-linejoin="round"/>
<path d="M454.5 613.0L454.5 588.0Q454.5 585.0 457.5 585.0L588.0 585.0Q591.0 585.0 591.0 588.0L591.0 624.0" fill="none" stroke="#ada089" stroke-width="4.06" stroke-linecap="butt" stroke-linejoin="round" transform="translate(-0.52,-0.52)"/>
<path d="M454.5 613.0L454.5 588.0Q454.5 585.0 457.5 585.0L588.0 585.0Q591.0 585.0 591.0 588.0L591.0 624.0" fill="none" stroke="#d2c8b5" stroke-width="1.62" stroke-linecap="butt" stroke-linejoin="round" transform="translate(-1.16,-1.16)"/>
<line x1="331.8" y1="578" x2="331.8" y2="586" stroke="#8c806c" stroke-width="2.6"/>
<line x1="522.9" y1="578" x2="522.9" y2="586" stroke="#8c806c" stroke-width="2.6"/>
<rect x="279.0" y="581.4" width="13.0" height="7.2" fill="#e4e7e9" rx="1"/>
<ellipse cx="285.5" cy="578.5" rx="2.0" ry="2.0" fill="#dfe3ea"/>
<rect x="284.6" y="579.0" width="1.8" height="4.0" fill="#8a8f96"/>
<rect x="372.5" y="581.4" width="13.0" height="7.2" fill="#e4e7e9" rx="1"/>
<ellipse cx="379.0" cy="578.5" rx="2.0" ry="2.0" fill="#dfe3ea"/>
<rect x="378.1" y="579.0" width="1.8" height="4.0" fill="#8a8f96"/>
<rect x="373.0" y="609.2" width="13.0" height="7.2" fill="#e4e7e9" rx="1"/>
<ellipse cx="379.5" cy="606.3" rx="2.0" ry="2.0" fill="#dfe3ea"/>
<rect x="378.6" y="606.8" width="1.8" height="4.0" fill="#8a8f96"/>
<rect x="395.4" y="624.0" width="8.4" height="9.0" fill="#d5d9dc" rx="2"/>
<ellipse cx="399.6" cy="633.0" rx="4.2" ry="2.0" fill="#eceeef"/>
<rect x="403.6" y="628.0" width="4.0" height="2.2" fill="#e4e7e9"/>
<rect x="470.0" y="581.4" width="13.0" height="7.2" fill="#e4e7e9" rx="1"/>
<ellipse cx="476.5" cy="578.5" rx="2.0" ry="2.0" fill="#dfe3ea"/>
<rect x="475.6" y="579.0" width="1.8" height="4.0" fill="#8a8f96"/>
<rect x="564.7" y="609.2" width="13.0" height="7.2" fill="#e4e7e9" rx="1"/>
<ellipse cx="571.2" cy="606.3" rx="2.0" ry="2.0" fill="#dfe3ea"/>
<rect x="570.3" y="606.8" width="1.8" height="4.0" fill="#8a8f96"/>
<rect x="602.5" y="609.2" width="13.0" height="7.2" fill="#e4e7e9" rx="1"/>
<ellipse cx="609.0" cy="606.3" rx="2.0" ry="2.0" fill="#dfe3ea"/>
<rect x="608.1" y="606.8" width="1.8" height="4.0" fill="#8a8f96"/>
<rect x="585.1" y="624.0" width="8.4" height="9.0" fill="#d5d9dc" rx="2"/>
<ellipse cx="589.3" cy="633.0" rx="4.2" ry="2.0" fill="#eceeef"/>
<rect x="593.3" y="628.0" width="4.0" height="2.2" fill="#e4e7e9"/>
<rect x="474.0" y="608.6" width="11.0" height="8.4" fill="#e4e7e9" rx="1"/>
<rect x="674.4" y="596.0" width="3.6" height="50.0" fill="#c9c7be" rx="1.5" opacity="0.5"/>
<rect x="702.0" y="643.6" width="18.0" height="7.8" fill="#e6e8ea" rx="2"/>
<rect x="741.3" y="643.4" width="16.4" height="8.2" fill="#dfe2e4" rx="1"/>
<line x1="749.5" y1="630" x2="749.5" y2="689" stroke="#8f8878" stroke-width="1.1"/>
<rect x="748.2" y="636.0" width="2.6" height="8.0" fill="#c4c9cc"/>
<rect x="796.8" y="643.4" width="16.4" height="8.2" fill="#dfe2e4" rx="1"/>
<line x1="805" y1="630" x2="805" y2="689" stroke="#8f8878" stroke-width="1.1"/>
<rect x="803.7" y="636.0" width="2.6" height="8.0" fill="#c4c9cc"/>
<path d="M734 695.552L734 723.548A18.899999999999977 12.851999999999986 0 0 0 771.8 723.548L771.8 695.552Z" fill="url(#gSmallTank)"/>
<ellipse cx="752.9" cy="695.6" rx="18.9" ry="12.9" fill="#b9b9b5"/>
<path d="M734.5 695.552A18.899999999999977 12.851999999999986 0 0 0 749.9 708.104L749.9 697.552L736 697.552Z" fill="#a9a9a5"/>
<path d="M756.9 697.4798000000001L770.8 697.4798000000001A18.899999999999977 12.851999999999986 0 0 1 756.9 708.404Z" fill="#9f9f9b" opacity="0.8"/>
<path d="M735 693.552L770.8 693.552L770.8 697.052L735 697.052Z" fill="#a5a5a1" opacity="0.7"/>
<path d="M789 695.62L789 723.48A19.0 12.920000000000002 0 0 0 827 723.48L827 695.62Z" fill="url(#gSmallTank)"/>
<ellipse cx="808.0" cy="695.6" rx="19.0" ry="12.9" fill="#b9b9b5"/>
<path d="M789.5 695.62A19.0 12.920000000000002 0 0 0 805.0 708.2400000000001L805.0 697.62L791 697.62Z" fill="#a9a9a5"/>
<path d="M812.0 697.558L826 697.558A19.0 12.920000000000002 0 0 1 812.0 708.5400000000001Z" fill="#9f9f9b" opacity="0.8"/>
<path d="M790 693.62L826 693.62L826 697.12L790 697.12Z" fill="#a5a5a1" opacity="0.7"/>
<rect x="749.1" y="683.5" width="8.0" height="4.0" fill="#333"/>
<rect x="753.6" y="687.3" width="8.6" height="9.0" fill="#2f5a86" rx="1.5"/>
<rect x="750.6" y="689.5" width="3.4" height="4.6" fill="#d9a24a"/>
<rect x="751.1" y="696.0" width="7.0" height="2.5" fill="#333"/>
<rect x="804.5" y="683.5" width="8.0" height="4.0" fill="#333"/>
<rect x="809.0" y="687.3" width="8.6" height="9.0" fill="#2f5a86" rx="1.5"/>
<rect x="806.0" y="689.5" width="3.4" height="4.6" fill="#d9a24a"/>
<rect x="806.5" y="696.0" width="7.0" height="2.5" fill="#333"/>
<path d="M852 548Q852 543.8 856.5 543.8L1167.5 543.8L1167.5 552.6L852 552.6Z" fill="#434a59"/>
<rect x="861.6" y="549.4" width="296.0" height="3.2" fill="#3a404d"/>
<rect x="852.0" y="548.0" width="9.8" height="107.0" fill="#434a59"/>
<rect x="1157.5" y="556.0" width="10.0" height="100.0" fill="#434a59"/>
<rect x="861.0" y="598.4" width="297.0" height="7.6" fill="#434a59"/>
<rect x="861.6" y="605.6" width="296.0" height="4.0" fill="#2c2e33"/>
<rect x="851.5" y="652.7" width="316.0" height="6.5" fill="#434a59"/>
<rect x="851.5" y="659.0" width="316.0" height="5.5" fill="#2b2a29"/>
<rect x="851.5" y="664.0" width="9.4" height="29.0" fill="#2b2a29"/>
<rect x="1158.0" y="664.0" width="9.5" height="29.0" fill="#2b2a29"/>
<path d="M851 648L864 648L856 665L851 665Z" fill="#b9bbc0"/>
<path d="M1158 652L1167.5 652L1167.5 665L1162 665Z" fill="#3a404d"/>
<rect x="861.6" y="552.6" width="296.0" height="3.4" fill="#2c2e33"/>
<path d="M850.0 648.6L965.9 648.6Q970.9 648.6 970.9 653.6L970.9 725.0" fill="none" stroke="#80745d" stroke-width="6.2" stroke-linecap="butt" stroke-linejoin="round"/>
<path d="M850.0 648.6L965.9 648.6Q970.9 648.6 970.9 653.6L970.9 725.0" fill="none" stroke="#ada089" stroke-width="4.34" stroke-linecap="butt" stroke-linejoin="round" transform="translate(-0.56,-0.56)"/>
<path d="M850.0 648.6L965.9 648.6Q970.9 648.6 970.9 653.6L970.9 725.0" fill="none" stroke="#d2c8b5" stroke-width="1.74" stroke-linecap="butt" stroke-linejoin="round" transform="translate(-1.24,-1.24)"/>
<path d="M861.5 647.0L861.5 611.8Q861.5 608.8 864.5 608.8L871.0 608.8" fill="none" stroke="#80745d" stroke-width="3.8" stroke-linecap="butt" stroke-linejoin="round"/>
<path d="M861.5 647.0L861.5 611.8Q861.5 608.8 864.5 608.8L871.0 608.8" fill="none" stroke="#ada089" stroke-width="2.66" stroke-linecap="butt" stroke-linejoin="round" transform="translate(-0.34,-0.34)"/>
<path d="M861.5 647.0L861.5 611.8Q861.5 608.8 864.5 608.8L871.0 608.8" fill="none" stroke="#d2c8b5" stroke-width="1.06" stroke-linecap="butt" stroke-linejoin="round" transform="translate(-0.76,-0.76)"/>
<path d="M889.0 620.0L896.0 620.0Q902.0 620.0 906.9 623.5L933.3 642.7Q938.2 646.2 944.2 646.2L1000.0 646.2" fill="none" stroke="#857a64" stroke-width="5" stroke-linecap="butt" stroke-linejoin="round"/>
<path d="M889.0 620.0L896.0 620.0Q902.0 620.0 906.9 623.5L933.3 642.7Q938.2 646.2 944.2 646.2L1000.0 646.2" fill="none" stroke="#b5ae9d" stroke-width="3.50" stroke-linecap="butt" stroke-linejoin="round" transform="translate(-0.45,-0.45)"/>
<path d="M889.0 620.0L896.0 620.0Q902.0 620.0 906.9 623.5L933.3 642.7Q938.2 646.2 944.2 646.2L1000.0 646.2" fill="none" stroke="#d6d0c3" stroke-width="1.40" stroke-linecap="butt" stroke-linejoin="round" transform="translate(-1.00,-1.00)"/>
<path d="M1064.0 646.8L1394.7 646.8" fill="none" stroke="#857a64" stroke-width="6.4" stroke-linecap="butt" stroke-linejoin="round"/>
<path d="M1064.0 646.8L1394.7 646.8" fill="none" stroke="#b5ae9d" stroke-width="4.48" stroke-linecap="butt" stroke-linejoin="round" transform="translate(-0.58,-0.58)"/>
<path d="M1064.0 646.8L1394.7 646.8" fill="none" stroke="#dcd7cb" stroke-width="1.79" stroke-linecap="butt" stroke-linejoin="round" transform="translate(-1.28,-1.28)"/>
<path d="M869.6999999999999 546.4L869.6999999999999 647.4A10.6 4 0 0 0 890.9 647.4L890.9 546.4Z" fill="url(#gFilter)"/>
<path d="M867.9 643.4A12.4 5 0 0 0 892.6999999999999 643.4L892.6999999999999 647.4A12.4 5 0 0 1 867.9 647.4Z" fill="#b5b8b6"/>
<path d="M866.9 545.4L866.9 550.4A13.4 6 0 0 0 893.6999999999999 550.4L893.6999999999999 545.4Z" fill="#9ea19f"/>
<ellipse cx="880.3" cy="545.4" rx="13.4" ry="6.0" fill="#c3c6c4"/>
<ellipse cx="880.3" cy="544.4" rx="9.4" ry="4.0" fill="#a9acaa"/>
<ellipse cx="880.3" cy="542.9" rx="3.5" ry="2.0" fill="#d5d8d6"/>
<line x1="880.3" y1="531.4" x2="880.3" y2="542.4" stroke="#b9bcba" stroke-width="1.2"/>
<ellipse cx="880.3" cy="527.9" rx="4.0" ry="3.8" fill="#a9acaa"/>
<ellipse cx="879.7" cy="527.2" rx="2.6" ry="2.4" fill="#c6c9c7"/>
<rect x="979.3" y="414" width="5.4" height="187" fill="url(#gCopper)"/>
<rect x="1032.8" y="414" width="5.4" height="98" fill="url(#gCopper)"/>
<rect x="978.7" y="402.8" width="6.6" height="22" rx="2.4" fill="#b59886"/>
<rect x="980.4" y="404" width="2.8" height="19" rx="1.2" fill="#f3e9e3"/>
<path d="M979.1 424L984.9 424L986.2 451L977.8 451Z" fill="url(#gCopper)"/>
<rect x="977.3" y="451.6" width="9.4" height="1.6" fill="#d9c9c0" rx="0.8"/>
<rect x="977.3" y="454.8" width="9.4" height="1.6" fill="#d9c9c0" rx="0.8"/>
<rect x="977.3" y="458.0" width="9.4" height="1.6" fill="#d9c9c0" rx="0.8"/>
<path d="M977.8 460L986.2 460L984.9 483L979.1 483Z" fill="url(#gCopper)"/>
<rect x="977.9" y="484.5" width="8.2" height="1.6" fill="#d9c9c0" rx="0.8"/>
<rect x="977.9" y="488.5" width="8.2" height="1.6" fill="#d9c9c0" rx="0.8"/>
<rect x="977.9" y="492.5" width="8.2" height="1.6" fill="#d9c9c0" rx="0.8"/>
<rect x="977.9" y="496.0" width="8.2" height="1.6" fill="#d9c9c0" rx="0.8"/>
<rect x="1032.2" y="402.8" width="6.6" height="22" rx="2.4" fill="#b59886"/>
<rect x="1033.9" y="404" width="2.8" height="19" rx="1.2" fill="#f3e9e3"/>
<path d="M1032.6 424L1038.4 424L1039.7 451L1031.3 451Z" fill="url(#gCopper)"/>
<rect x="1030.8" y="451.6" width="9.4" height="1.6" fill="#d9c9c0" rx="0.8"/>
<rect x="1030.8" y="454.8" width="9.4" height="1.6" fill="#d9c9c0" rx="0.8"/>
<rect x="1030.8" y="458.0" width="9.4" height="1.6" fill="#d9c9c0" rx="0.8"/>
<path d="M1031.3 460L1039.7 460L1038.4 483L1032.6 483Z" fill="url(#gCopper)"/>
<rect x="1031.4" y="484.5" width="8.2" height="1.6" fill="#d9c9c0" rx="0.8"/>
<rect x="1031.4" y="488.5" width="8.2" height="1.6" fill="#d9c9c0" rx="0.8"/>
<rect x="1031.4" y="492.5" width="8.2" height="1.6" fill="#d9c9c0" rx="0.8"/>
<rect x="1031.4" y="496.0" width="8.2" height="1.6" fill="#d9c9c0" rx="0.8"/>
<rect x="979.2" y="500" width="6" height="100" fill="url(#gCopper)"/>
<ellipse cx="982.2" cy="568.5" rx="5.0" ry="2.0" fill="#c9b3a6"/>
<ellipse cx="982.2" cy="578.7" rx="7.2" ry="3.4" fill="#cdb7aa"/>
<ellipse cx="982.2" cy="577.3" rx="6.0" ry="2.4" fill="#b58a6a"/>
<rect x="979.2" y="572.5" width="6.0" height="5.0" fill="url(#gCopper)"/>
<ellipse cx="982.2" cy="591.2" rx="7.2" ry="3.4" fill="#cdb7aa"/>
<ellipse cx="982.2" cy="589.8" rx="6.0" ry="2.4" fill="#b58a6a"/>
<rect x="979.2" y="585.0" width="6.0" height="5.0" fill="url(#gCopper)"/>
<ellipse cx="982.2" cy="600.0" rx="3.6" ry="3.2" fill="#dcc0a8"/>
<rect x="1016.0" y="555.5" width="32.0" height="22.6" fill="#2c2e32"/>
<path d="M1022.3 557L1041.9 557L1044.6 577.6L1019.6 577.6Z" fill="url(#gCone)"/>
<path d="M1019.4 514Q1019.4 510 1032.2 510Q1045 510 1045 514L1045 556.5Q1032.2 560.5 1019.4 556.5Z" fill="url(#gMotor)"/>
<ellipse cx="1032.2" cy="513.6" rx="12.2" ry="3.4" fill="#4e4e4e"/>
<rect x="1020.6" y="577.6" width="23.4" height="82.0" fill="url(#gCone)"/>
<line x1="1022.4" y1="578" x2="1022.4" y2="659" stroke="#7a827c" stroke-width="0.8"/>
<line x1="1042.3" y1="578" x2="1042.3" y2="659" stroke="#7a827c" stroke-width="0.8"/>
<rect x="1013.7" y="657.0" width="36.3" height="9.5" fill="#2c2e32"/>
<path d="M1020.6 652L1044 652L1044 659Q1032.3 664 1020.6 659Z" fill="url(#gCone)"/>
<rect x="998.0" y="640.6" width="23.0" height="12.2" fill="url(#ribs)" rx="1.5"/>
<rect x="1043.5" y="640.6" width="21.0" height="12.2" fill="url(#ribs)" rx="1.5"/>
<rect x="998" y="640.6" width="66.5" height="12.2" fill="url(#gFlex)" opacity="0.3"/>
<rect x="1020.6" y="636.0" width="23.4" height="22.0" fill="url(#gCone)"/>
<rect x="1076.6" y="396.6" width="114.2" height="55.4" fill="#8ca8a1" rx="1.5"/>
<rect x="1076.6" y="451.5" width="114.2" height="104.5" fill="#7f9b93" rx="1.5"/>
<rect x="1186.8" y="397.5" width="4.0" height="158.0" fill="#71908a"/>
<line x1="1076.6" y1="451.6" x2="1190.8" y2="451.6" stroke="#98b3ac" stroke-width="0.8"/>
<rect x="1110.3" y="472.4" width="47.2" height="21.8" fill="#2b2e2e" rx="1"/>
<rect x="1115.2" y="477.3" width="38.0" height="14.8" fill="#dcdedd"/>
<rect x="1098.9" y="502.0" width="8.0" height="10.0" fill="#2d302f" rx="0.8"/>
<rect x="1100.1" y="503.6" width="5.6" height="3.6" fill="#d9dbda"/>
<rect x="1100.3" y="509.0" width="2.0" height="1.6" fill="#c78a2a"/>
<rect x="1129.9" y="502.0" width="8.0" height="10.0" fill="#2d302f" rx="0.8"/>
<rect x="1131.1" y="503.6" width="5.6" height="3.6" fill="#d9dbda"/>
<rect x="1131.3" y="509.0" width="2.0" height="1.6" fill="#c78a2a"/>
<rect x="1160.4" y="502.0" width="8.0" height="10.0" fill="#2d302f" rx="0.8"/>
<rect x="1161.6" y="503.6" width="5.6" height="3.6" fill="#d9dbda"/>
<rect x="1161.8" y="509.0" width="2.0" height="1.6" fill="#c78a2a"/>
<ellipse cx="1133.9" cy="526.3" rx="4.0" ry="3.0" fill="#e2443c"/>
<rect x="1101.0" y="523.5" width="2.0" height="10.0" fill="#d9574f"/>
<ellipse cx="1102.0" cy="524.0" rx="2.0" ry="2.2" fill="#e2443c"/>
<rect x="1082.7" y="455.9" width="4.0" height="4.0" fill="#2d302f"/>
<rect x="1082.7" y="548.8" width="4.0" height="4.0" fill="#2d302f"/>
<ellipse cx="1178.4" cy="440.4" rx="5.6" ry="4.2" fill="#4c4f50"/>
<rect x="1177.8" y="430.0" width="1.4" height="9.0" fill="#6a6d6e"/>
<rect x="1175.6" y="412.0" width="5.6" height="19.5" fill="url(#gSignal)" rx="1.5"/>
<ellipse cx="1178.4" cy="411.6" rx="2.9" ry="2.2" fill="#55585a"/>
<rect x="1157.5" y="556.0" width="10.0" height="40.0" fill="#434a59"/>
<path d="M1036.0 404.0L1036.0 371.1Q1036.0 364.1 1043.0 364.1L1421.0 364.1" fill="none" stroke="#8a8678" stroke-width="6.4" stroke-linecap="butt" stroke-linejoin="round"/>
<path d="M1036.0 404.0L1036.0 371.1Q1036.0 364.1 1043.0 364.1L1421.0 364.1" fill="none" stroke="#bdb9a8" stroke-width="4.48" stroke-linecap="butt" stroke-linejoin="round" transform="translate(-0.58,-0.58)"/>
<path d="M1036.0 404.0L1036.0 371.1Q1036.0 364.1 1043.0 364.1L1421.0 364.1" fill="none" stroke="#e2dfd2" stroke-width="1.79" stroke-linecap="butt" stroke-linejoin="round" transform="translate(-1.28,-1.28)"/>
<rect x="1415.3" y="458.3" width="11.0" height="20.0" fill="#8f98a6" rx="2"/>
<rect x="1415.3" y="505.0" width="11.0" height="20.0" fill="#8f98a6" rx="2"/>
<path d="M1360.6 381.4L1363.7 381.4Q1366.7 381.4 1366.7 384.5L1366.7 406.5Q1366.7 414.5 1374.7 414.5L1511.6 414.5Q1519.6 414.5 1519.6 422.5L1519.6 751.5Q1519.6 759.5 1511.6 759.5L1138.0 759.5" fill="none" stroke="#857a64" stroke-width="7.8" stroke-linecap="butt" stroke-linejoin="round"/>
<path d="M1360.6 381.4L1363.7 381.4Q1366.7 381.4 1366.7 384.5L1366.7 406.5Q1366.7 414.5 1374.7 414.5L1511.6 414.5Q1519.6 414.5 1519.6 422.5L1519.6 751.5Q1519.6 759.5 1511.6 759.5L1138.0 759.5" fill="none" stroke="#b5ae9d" stroke-width="5.46" stroke-linecap="butt" stroke-linejoin="round" transform="translate(-0.70,-0.70)"/>
<path d="M1360.6 381.4L1363.7 381.4Q1366.7 381.4 1366.7 384.5L1366.7 406.5Q1366.7 414.5 1374.7 414.5L1511.6 414.5Q1519.6 414.5 1519.6 422.5L1519.6 751.5Q1519.6 759.5 1511.6 759.5L1138.0 759.5" fill="none" stroke="#dcd7cb" stroke-width="2.18" stroke-linecap="butt" stroke-linejoin="round" transform="translate(-1.56,-1.56)"/>
<path d="M1360.6 393.6L1400.4 393.6Q1407.4 393.6 1407.4 400.6L1407.4 696.7Q1407.4 703.7 1400.4 703.7L1139.0 703.7Q1132.0 703.7 1132.0 710.7L1132.0 725.0" fill="none" stroke="#857a64" stroke-width="6.8" stroke-linecap="butt" stroke-linejoin="round"/>
<path d="M1360.6 393.6L1400.4 393.6Q1407.4 393.6 1407.4 400.6L1407.4 696.7Q1407.4 703.7 1400.4 703.7L1139.0 703.7Q1132.0 703.7 1132.0 710.7L1132.0 725.0" fill="none" stroke="#b5ae9d" stroke-width="4.76" stroke-linecap="butt" stroke-linejoin="round" transform="translate(-0.61,-0.61)"/>
<path d="M1360.6 393.6L1400.4 393.6Q1407.4 393.6 1407.4 400.6L1407.4 696.7Q1407.4 703.7 1400.4 703.7L1139.0 703.7Q1132.0 703.7 1132.0 710.7L1132.0 725.0" fill="none" stroke="#dcd7cb" stroke-width="1.90" stroke-linecap="butt" stroke-linejoin="round" transform="translate(-1.36,-1.36)"/>
<path d="M1407.4 428.0L1404.7 430.9Q1402.0 433.9 1398.0 433.9L1360.6 433.9" fill="none" stroke="#857a64" stroke-width="5.4" stroke-linecap="butt" stroke-linejoin="round"/>
<path d="M1407.4 428.0L1404.7 430.9Q1402.0 433.9 1398.0 433.9L1360.6 433.9" fill="none" stroke="#b5ae9d" stroke-width="3.78" stroke-linecap="butt" stroke-linejoin="round" transform="translate(-0.49,-0.49)"/>
<path d="M1407.4 428.0L1404.7 430.9Q1402.0 433.9 1398.0 433.9L1360.6 433.9" fill="none" stroke="#dcd7cb" stroke-width="1.51" stroke-linecap="butt" stroke-linejoin="round" transform="translate(-1.08,-1.08)"/>
<path d="M1407.4 470.0L1404.7 472.9Q1402.0 475.8 1398.0 475.8L1360.6 475.8" fill="none" stroke="#857a64" stroke-width="5.4" stroke-linecap="butt" stroke-linejoin="round"/>
<path d="M1407.4 470.0L1404.7 472.9Q1402.0 475.8 1398.0 475.8L1360.6 475.8" fill="none" stroke="#b5ae9d" stroke-width="3.78" stroke-linecap="butt" stroke-linejoin="round" transform="translate(-0.49,-0.49)"/>
<path d="M1407.4 470.0L1404.7 472.9Q1402.0 475.8 1398.0 475.8L1360.6 475.8" fill="none" stroke="#dcd7cb" stroke-width="1.51" stroke-linecap="butt" stroke-linejoin="round" transform="translate(-1.08,-1.08)"/>
<path d="M1360.6 401.8L1388.8 401.8Q1394.8 401.8 1394.8 407.8L1394.8 640.8Q1394.8 646.8 1388.8 646.8L1380.0 646.8" fill="none" stroke="#857a64" stroke-width="5.8" stroke-linecap="butt" stroke-linejoin="round"/>
<path d="M1360.6 401.8L1388.8 401.8Q1394.8 401.8 1394.8 407.8L1394.8 640.8Q1394.8 646.8 1388.8 646.8L1380.0 646.8" fill="none" stroke="#b5ae9d" stroke-width="4.06" stroke-linecap="butt" stroke-linejoin="round" transform="translate(-0.52,-0.52)"/>
<path d="M1360.6 401.8L1388.8 401.8Q1394.8 401.8 1394.8 407.8L1394.8 640.8Q1394.8 646.8 1388.8 646.8L1380.0 646.8" fill="none" stroke="#dcd7cb" stroke-width="1.62" stroke-linecap="butt" stroke-linejoin="round" transform="translate(-1.16,-1.16)"/>
<path d="M1360.6 442.3L1388.0 442.3Q1391.0 442.3 1392.9 444.6L1394.8 447.0" fill="none" stroke="#857a64" stroke-width="5.2" stroke-linecap="butt" stroke-linejoin="round"/>
<path d="M1360.6 442.3L1388.0 442.3Q1391.0 442.3 1392.9 444.6L1394.8 447.0" fill="none" stroke="#b5ae9d" stroke-width="3.64" stroke-linecap="butt" stroke-linejoin="round" transform="translate(-0.47,-0.47)"/>
<path d="M1360.6 442.3L1388.0 442.3Q1391.0 442.3 1392.9 444.6L1394.8 447.0" fill="none" stroke="#dcd7cb" stroke-width="1.46" stroke-linecap="butt" stroke-linejoin="round" transform="translate(-1.04,-1.04)"/>
<path d="M1360.6 482.9L1392.0 482.9" fill="none" stroke="#857a64" stroke-width="4.6" stroke-linecap="butt" stroke-linejoin="round"/>
<path d="M1360.6 482.9L1392.0 482.9" fill="none" stroke="#b5ae9d" stroke-width="3.22" stroke-linecap="butt" stroke-linejoin="round" transform="translate(-0.41,-0.41)"/>
<path d="M1360.6 482.9L1392.0 482.9" fill="none" stroke="#dcd7cb" stroke-width="1.29" stroke-linecap="butt" stroke-linejoin="round" transform="translate(-0.92,-0.92)"/>
<path d="M1360.6 489.5L1392.0 489.5" fill="none" stroke="#857a64" stroke-width="4.6" stroke-linecap="butt" stroke-linejoin="round"/>
<path d="M1360.6 489.5L1392.0 489.5" fill="none" stroke="#b5ae9d" stroke-width="3.22" stroke-linecap="butt" stroke-linejoin="round" transform="translate(-0.41,-0.41)"/>
<path d="M1360.6 489.5L1392.0 489.5" fill="none" stroke="#dcd7cb" stroke-width="1.29" stroke-linecap="butt" stroke-linejoin="round" transform="translate(-0.92,-0.92)"/>
<path d="M1289.5 122.5L1289.5 114.2Q1289.5 107.2 1296.5 107.2L1413.9 107.2Q1420.9 107.2 1420.9 114.2L1420.9 554.0" fill="none" stroke="#7f6f4a" stroke-width="7.4" stroke-linecap="round" stroke-linejoin="round"/>
<path d="M1289.5 122.5L1289.5 114.2Q1289.5 107.2 1296.5 107.2L1413.9 107.2Q1420.9 107.2 1420.9 114.2L1420.9 554.0" fill="none" stroke="#a3916a" stroke-width="5.18" stroke-linecap="round" stroke-linejoin="round" transform="translate(-0.67,-0.67)"/>
<path d="M1289.5 122.5L1289.5 114.2Q1289.5 107.2 1296.5 107.2L1413.9 107.2Q1420.9 107.2 1420.9 114.2L1420.9 554.0" fill="none" stroke="#bfae88" stroke-width="2.07" stroke-linecap="round" stroke-linejoin="round" transform="translate(-1.48,-1.48)"/>
<path d="M1425 430.7L1476.8 430.7L1476.8 443M1425 477.3L1476.8 477.3L1476.8 490" stroke="#8d8676" stroke-width="0.9" fill="none"/>
<path d="M1447.0 460.9L1447.0 488.5A18.799999999999955 11.5 0 0 0 1484.6 488.5L1484.6 460.9Z" fill="url(#gSmallTankB)"/>
<ellipse cx="1465.8" cy="460.9" rx="18.8" ry="11.5" fill="#b9bcc1"/>
<rect x="1469.8" y="455.4" width="14.2" height="16.0" fill="#a7a9ac"/>
<rect x="1462.2" y="442.4" width="7.6" height="22.0" fill="#aeb1b5"/>
<ellipse cx="1454.6" cy="460.6" rx="5.0" ry="4.6" fill="#3c3e40"/>
<rect x="1473.7" y="441.9" width="6.2" height="9.4" fill="#2f5a86" rx="1"/>
<rect x="1474.8" y="450.6" width="4.0" height="3.0" fill="#d9a24a"/>
<rect x="1474.6" y="453.4" width="4.6" height="4.4" fill="#c9cbcd"/>
<path d="M1447.0 507.0L1447.0 536.7A18.799999999999955 11.5 0 0 0 1484.6 536.7L1484.6 507.0Z" fill="url(#gSmallTankB)"/>
<ellipse cx="1465.8" cy="507.0" rx="18.8" ry="11.5" fill="#b9bcc1"/>
<rect x="1469.8" y="501.5" width="14.2" height="16.0" fill="#a7a9ac"/>
<rect x="1462.2" y="488.5" width="7.6" height="22.0" fill="#aeb1b5"/>
<ellipse cx="1454.6" cy="506.7" rx="5.0" ry="4.6" fill="#3c3e40"/>
<rect x="1473.7" y="488.0" width="6.2" height="9.4" fill="#2f5a86" rx="1"/>
<rect x="1474.8" y="496.7" width="4.0" height="3.0" fill="#d9a24a"/>
<rect x="1474.6" y="499.5" width="4.6" height="4.4" fill="#c9cbcd"/>
<rect x="1294.9" y="710.0" width="36.7" height="23.6" fill="#284262" rx="1"/>
<rect x="1297.5" y="712.0" width="31.5" height="12.0" fill="#2d4868"/>
<rect x="1294.9" y="726.0" width="36.7" height="7.6" fill="#233b58" rx="1"/>
<path d="M1300.8 704.7L1324.2 704.7L1322.5 718Q1312.5 724 1302.5 718Z" fill="url(#gCone)"/>
<rect x="1280.8" y="697.6" width="17.7" height="12.8" fill="url(#ribs)" rx="2"/>
<rect x="1328.7" y="697.6" width="18.8" height="12.8" fill="url(#ribs)" rx="2"/>
<rect x="1280.8" y="697.6" width="66.7" height="12.8" fill="url(#gFlex)" opacity="0.3"/>
<rect x="1298.1" y="682.0" width="30.8" height="22.7" fill="#2a4565"/>
<path d="M1304.3 683L1323.2 683L1325.2 697Q1325 701.5 1313.6 701.5Q1301.4 701.5 1301.4 697Z" fill="url(#gCone)"/>
<path d="M1301.1 640Q1301.1 634.8 1313.4 634.8Q1325.7 634.8 1325.7 640L1325.7 680Q1313.4 686.5 1301.1 680Z" fill="url(#gBlueMotor)"/>
<ellipse cx="1313.4" cy="640.4" rx="11.6" ry="5.0" fill="#35516f"/>
<path d="M1301.1 674Q1313.4 680.5 1325.7 674" fill="none" stroke="#223a56" stroke-width="1"/>
<path d="M1301.1 677Q1313.4 683.5 1325.7 677" fill="none" stroke="#223a56" stroke-width="1"/>
<rect x="1263.9" y="642.8" width="15.4" height="8.0" fill="#e1e4e7" rx="1"/>
<rect x="1270.7" y="637.0" width="1.8" height="7.0" fill="#9aa0a8"/>
<ellipse cx="1271.6" cy="636.6" rx="1.8" ry="2.2" fill="#d5dcec"/>
<rect x="1325.7" y="642.8" width="9.8" height="8.0" fill="#e1e4e7" rx="1"/>
<rect x="1329.7" y="637.0" width="1.8" height="7.0" fill="#9aa0a8"/>
<ellipse cx="1330.6" cy="636.6" rx="1.8" ry="2.2" fill="#d5dcec"/>
<rect x="1281.4" y="640.0" width="1.5" height="5.0" fill="#a33"/>
<ellipse cx="1282.1" cy="639.3" rx="3.0" ry="2.2" fill="#e0443a"/>
<path d="M970.6 722.7L970.6 735.4Q970.6 744.1 979.3 744.1L988.0 744.1" fill="none" stroke="#8b939d" stroke-width="11.4" stroke-linecap="butt" stroke-linejoin="round"/>
<path d="M970.6 722.7L970.6 735.4Q970.6 744.1 979.3 744.1L988.0 744.1" fill="none" stroke="#b4bcc6" stroke-width="7.98" stroke-linecap="butt" stroke-linejoin="round" transform="translate(-1.03,-1.03)"/>
<path d="M970.6 722.7L970.6 735.4Q970.6 744.1 979.3 744.1L988.0 744.1" fill="none" stroke="#d3d9e0" stroke-width="3.19" stroke-linecap="butt" stroke-linejoin="round" transform="translate(-2.28,-2.28)"/>
<path d="M1131.9 722.7L1131.9 735.1Q1131.9 744.1 1123.0 744.1L1114.0 744.1" fill="none" stroke="#8b939d" stroke-width="11.4" stroke-linecap="butt" stroke-linejoin="round"/>
<path d="M1131.9 722.7L1131.9 735.1Q1131.9 744.1 1123.0 744.1L1114.0 744.1" fill="none" stroke="#b4bcc6" stroke-width="7.98" stroke-linecap="butt" stroke-linejoin="round" transform="translate(-1.03,-1.03)"/>
<path d="M1131.9 722.7L1131.9 735.1Q1131.9 744.1 1123.0 744.1L1114.0 744.1" fill="none" stroke="#d3d9e0" stroke-width="3.19" stroke-linecap="butt" stroke-linejoin="round" transform="translate(-2.28,-2.28)"/>
<path d="M965.0 759.7L871.3 759.7Q863.3 759.7 863.3 767.7L863.3 878.0" fill="none" stroke="#857a66" stroke-width="8" stroke-linecap="butt" stroke-linejoin="round"/>
<path d="M965.0 759.7L871.3 759.7Q863.3 759.7 863.3 767.7L863.3 878.0" fill="none" stroke="#a89e8b" stroke-width="5.60" stroke-linecap="butt" stroke-linejoin="round" transform="translate(-0.72,-0.72)"/>
<path d="M965.0 759.7L871.3 759.7Q863.3 759.7 863.3 767.7L863.3 878.0" fill="none" stroke="#c2b9a9" stroke-width="2.24" stroke-linecap="butt" stroke-linejoin="round" transform="translate(-1.60,-1.60)"/>
<rect x="963.9" y="752.0" width="22.3" height="14.8" fill="#b9c1cb" rx="2"/>
<rect x="963.9" y="753.0" width="22.3" height="4.0" fill="#d0d6dd" rx="2"/>
<rect x="1115.8" y="752.0" width="22.3" height="14.8" fill="#b9c1cb" rx="2"/>
<rect x="1115.8" y="753.0" width="22.3" height="4.0" fill="#d0d6dd" rx="2"/>
<rect x="966.5" y="751.4" width="2.2" height="16.0" fill="#d7dde3" rx="1"/>
<rect x="981.5" y="751.4" width="2.2" height="16.0" fill="#d7dde3" rx="1"/>
<rect x="1119.5" y="751.4" width="2.2" height="16.0" fill="#d7dde3" rx="1"/>
<rect x="1134.5" y="751.4" width="2.2" height="16.0" fill="#d7dde3" rx="1"/>
<path d="M986.2 733Q986.2 730.5 989 730.5L1011 730.5Q1015 731 1018.1 733.4L1084.3 733.4Q1087 731 1091 730.5L1113 730.5Q1115.8 730.5 1115.8 733L1115.8 772Q1115.8 774.4 1113 774.4L1091 774.4Q1087 774 1084.3 771.6L1018.1 771.6Q1015 774 1011 774.4L989 774.4Q986.2 774.4 986.2 772Z" fill="url(#gYellow)"/>
<path d="M859.3 866L867.4 866L870.8 880Q870.8 888 863.3 888Q855.7 888 855.7 880Z" fill="#8f8674"/>
<ellipse cx="863.3" cy="881.0" rx="7.0" ry="5.2" fill="#a39a88"/>
<ellipse cx="863.3" cy="881.4" rx="5.0" ry="3.6" fill="#b3aa98"/>
<g fill="none">
<circle cx="1227.4" cy="342.4" r="10" stroke="#ffffff" stroke-width="1.5"/>
<circle cx="1227.4" cy="342.4" r="10" stroke="#e8323c" stroke-width="1.5" stroke-dasharray="3.93 3.93"/>
<path d="M1207.3 342.4L1221.2 342.4M1233.6 342.4L1247.7 342.4M1227.4 328.5L1227.4 338.6M1227.4 346.4L1227.4 356.6" stroke="#111" stroke-width="1.1"/>
</g>
<rect x="0" y="0" width="1586" height="27" fill="#333333" opacity="0.62"/>
<path d="M0 27L112 27L112 46Q112 51 107 51L0 51Z" fill="#363636" opacity="0.75"/>
<path d="M1504 27L1586 27L1586 51.5L1509 51.5Q1504 51.5 1504 46.5Z" fill="#363636" opacity="0.75"/>
<rect x="10.0" y="4.0" width="30.0" height="18.5" fill="#2a2a2a" rx="3.5"/>
<g stroke="#e0e0e0" stroke-width="1.1" fill="none"><path d="M13.8 13.2L26.8 13.2M14.3 16.6L27.3 16.6M17.6 10.8L16 19.6M23.6 12L25 19.6"/></g>
<circle cx="24.6" cy="9.2" r="3.4" fill="#d8d8d8"/><circle cx="23.6" cy="8.2" r="1.2" fill="#ffffff"/>
<path d="M31.2 11.9L34.6 15.3L38.0 11.9" fill="none" stroke="#e0e0e0" stroke-width="1.3" stroke-linecap="round" stroke-linejoin="round"/>
<rect x="47.0" y="4.0" width="109.4" height="18.5" fill="#2a2a2a" rx="3.5"/>
<path d="M54.2 6.6L51.2 6.6L51.2 9.6M61.8 6.6L64.8 6.6L64.8 9.6M54.2 19.4L51.2 19.4L51.2 16.4M61.8 19.4L64.8 19.4L64.8 16.4" stroke="#e0e0e0" stroke-width="1.1" fill="none"/>
<rect x="53.8" y="8.8" width="8.6" height="8.6" fill="#e4e4e4" rx="0.8"/>
<text x="72" y="17.3" fill="#e6e6e6" font-size="12" textLength="67.5" lengthAdjust="spacingAndGlyphs">Object Mode</text>
<path d="M146.4 11.9L149.8 15.3L153.2 11.9" fill="none" stroke="#e0e0e0" stroke-width="1.3" stroke-linecap="round" stroke-linejoin="round"/>
<text x="169" y="17.3" fill="#e6e6e6" font-size="12" textLength="25.6" lengthAdjust="spacingAndGlyphs">View</text>
<text x="210" y="17.3" fill="#e6e6e6" font-size="12" textLength="31.6" lengthAdjust="spacingAndGlyphs">Select</text>
<text x="257.3" y="17.3" fill="#e6e6e6" font-size="12" textLength="21.2" lengthAdjust="spacingAndGlyphs">Add</text>
<text x="294" y="17.3" fill="#e6e6e6" font-size="12" textLength="33.4" lengthAdjust="spacingAndGlyphs">Object</text>
<clipPath id="selclip"><rect x="9.5" y="30.3" width="93.5" height="17.8" rx="3.5"/></clipPath>
<g clip-path="url(#selclip)">
<rect x="9.5" y="30.3" width="93.5" height="17.8" fill="#545454"/>
<rect x="9.5" y="30.3" width="18.2" height="17.8" fill="#4772b3"/>
<rect x="27.7" y="30.3" width="1.0" height="17.8" fill="#3d3d3d"/>
<rect x="46.4" y="30.3" width="1.0" height="17.8" fill="#3d3d3d"/>
<rect x="65.1" y="30.3" width="1.0" height="17.8" fill="#3d3d3d"/>
<rect x="83.8" y="30.3" width="1.0" height="17.8" fill="#3d3d3d"/>
</g>
<rect x="11.8" y="32.6" width="13.4" height="13.2" fill="none" stroke="#ffffff" stroke-width="1.2" stroke-dasharray="2.6 1.6"/>
<path d="M36 32.4L44.2 32.4L44.2 40L40.2 40L40.2 45.8L30.6 45.8L30.6 37.4L36 37.4Z" fill="#d4d4d4"/>
<path d="M55.2 32.4L62.8 32.4L62.8 41.4L58.8 41.4L58.8 36.6L55.2 36.6Z" fill="#d4d4d4"/>
<rect x="49.6" y="37.6" width="8.6" height="8" fill="none" stroke="#d4d4d4" stroke-width="1" stroke-dasharray="2 1.4"/>
<path d="M72.6 32.4L82 32.4L82 41.6L78 41.6L78 45.8L68.2 45.8L68.2 37.2L72.6 37.2Z" fill="#d4d4d4"/>
<rect x="72.6" y="37.2" width="5.4" height="4.4" fill="#545454"/>
<rect x="87.6" y="32.8" width="12.6" height="12.6" fill="none" stroke="#d4d4d4" stroke-width="1" stroke-dasharray="2 1.5"/>
<rect x="90.9" y="36.1" width="6.2" height="6.2" fill="#d4d4d4"/>
<g style="filter:drop-shadow(0.6px 1px 0.6px rgba(0,0,0,0.75))">
<text x="65" y="72" fill="#ffffff" font-size="12" textLength="97.3" lengthAdjust="spacingAndGlyphs">User Orthographic</text>
<text x="65" y="90" fill="#ffffff" font-size="12" textLength="78.4" lengthAdjust="spacingAndGlyphs">(40) Collection</text>
</g>
<path d="M12.9 61L43.3 61Q46.8 61 46.8 64.5L46.8 94.3L9.4 94.3L9.4 64.5Q9.4 61 12.9 61Z" fill="#4772b3"/>
<path d="M9.4 95.3L46.8 95.3L46.8 125.3Q46.8 128.8 43.3 128.8L12.9 128.8Q9.4 128.8 9.4 125.3Z" fill="#2b2b2b"/>
<rect x="17" y="66.4" width="21.4" height="21" fill="none" stroke="#f0a832" stroke-width="1.3" stroke-dasharray="4 2.4"/>
<path d="M23.8 70L33.2 78.8L27.8 79.4L25.2 84Z" fill="#ececec"/>
<path d="M43 91.6L45.6 91.6L45.6 89Z" fill="#c9d3e6"/>
<circle cx="28" cy="111.7" r="10.8" fill="none" stroke="#e9e9e9" stroke-width="1.4"/>
<circle cx="28" cy="111.7" r="10.8" fill="none" stroke="#d64a42" stroke-width="1.4" stroke-dasharray="4.24 4.24"/>
<path d="M28 103.4L28 108.8M28 114.6L28 120M19.7 111.7L25.1 111.7M30.9 111.7L36.3 111.7" stroke="#cfcfcf" stroke-width="1.3" fill="none"/>
<path d="M12.9 136.4L43.3 136.4Q46.8 136.4 46.8 139.9L46.8 169.8L9.4 169.8L9.4 139.9Q9.4 136.4 12.9 136.4Z" fill="#2b2b2b"/>
<rect x="9.4" y="170.8" width="37.4" height="33.2" fill="#2b2b2b"/>
<rect x="9.4" y="205.0" width="37.4" height="33.6" fill="#2b2b2b"/>
<path d="M9.4 239.6L46.8 239.6L46.8 270.8Q46.8 274.3 43.3 274.3L12.9 274.3Q9.4 274.3 9.4 270.8Z" fill="#2b2b2b"/>
<g fill="#e6e6e6" stroke="none"><path d="M28 140.6L31.6 145.4L24.4 145.4Z"/><path d="M28 163L31.6 158.2L24.4 158.2Z"/><path d="M16.8 151.8L21.6 148.2L21.6 155.4Z"/><path d="M39.2 151.8L34.4 148.2L34.4 155.4Z"/></g>
<path d="M28 146L28 149.2M28 154.4L28 157.6M22.2 151.8L25.4 151.8M30.6 151.8L33.8 151.8" stroke="#e6e6e6" stroke-width="1.3" stroke-dasharray="1.6 1.2" fill="none"/>
<path d="M19.2 183.2A10 10 0 0 1 36.8 183.2M36.8 191.4A10 10 0 0 1 19.2 191.4" stroke="#e6e6e6" stroke-width="1.4" fill="none"/>
<path d="M16 184.6L22.6 184.6L19.3 189.6Z M33.4 189.8L40 189.8L36.7 184.8Z" fill="#e6e6e6"/>
<path d="M28 183.2L31.8 187.3L28 191.4L24.2 187.3Z" fill="#e6e6e6"/>
<rect x="19.3" y="221.0" width="9.6" height="9.6" fill="#e6e6e6"/>
<path d="M19.8 218.6L19.8 214.2L36.2 214.2L36.2 230L31.2 230" stroke="#e6e6e6" stroke-width="1.1" fill="none"/>
<path d="M28.8 221.2L33.4 216.6M30.4 216.4L33.8 216.4L33.8 219.8" stroke="#e6e6e6" stroke-width="1.2" fill="none"/>
<path d="M43 236L45.6 236L45.6 233.4Z" fill="#bdbdbd"/>
<circle cx="28" cy="257" r="9.6" fill="none" stroke="#e6e6e6" stroke-width="1.1" stroke-dasharray="8.4 6.68" stroke-dashoffset="-3.34"/>
<rect x="23.4" y="252.4" width="9.2" height="9.2" fill="#e6e6e6" rx="0.8"/>
<path d="M28 246L30.8 250L25.2 250Z M28 268L30.8 264L25.2 264Z M17 257L21 254.2L21 259.8Z M39 257L35 254.2L35 259.8Z" fill="#e6e6e6"/>
<path d="M12.9 281.4L43.3 281.4Q46.8 281.4 46.8 284.9L46.8 314.6L9.4 314.6L9.4 284.9Q9.4 281.4 12.9 281.4Z" fill="#2b2b2b"/>
<path d="M9.4 315.6L46.8 315.6L46.8 346.2Q46.8 349.7 43.3 349.7L12.9 349.7Q9.4 349.7 9.4 346.2Z" fill="#2b2b2b"/>
<path d="M17 301.2L18.6 296.8L32.4 286.4L35.2 290L21.6 300Z" fill="#e6e6e6"/>
<path d="M19.6 295.6L22.6 299.4" stroke="#2b2b2b" stroke-width="0.9"/>
<path d="M19 306Q24.4 309.4 29 303.4Q33.6 297.8 39.4 304.6" stroke="#6fd39b" stroke-width="1.5" fill="none" stroke-linecap="round"/>
<path d="M43 312L45.6 312L45.6 309.4Z" fill="#bdbdbd"/>
<path d="M30.6 344.4L30.6 338.6Q37.2 339.2 38.6 344.4Z M29.6 344.4L29.6 331.4Q40 331.8 40 344.4" fill="#6fd39b"/>
<path d="M29.6 344.4L29.6 331.4Q39.4 332.6 40 344.4Z" fill="#6fd39b"/>
<path d="M23 321.2L27.6 321.2L27.6 342.2L40.6 342.2L40.6 346.6L19.6 346.6L19.6 344L23 344Z" fill="#e6e6e6"/>
<path d="M23.4 325L25.6 325M23.4 328.6L25.6 328.6M23.4 332.2L25.6 332.2M23.4 335.8L25.6 335.8M23.4 339.4L25.6 339.4M30.6 344L30.6 346M34 344L34 346M37.4 344L37.4 346" stroke="#2b2b2b" stroke-width="0.9"/>
<rect x="9.4" y="356.2" width="37.4" height="33.6" fill="#2b2b2b" rx="3.5"/>
<path d="M20.4 371.6L24.4 365.8L38.6 365.8L38.6 380L34.6 385.8L20.4 385.8Z" fill="none" stroke="#7fd6a8" stroke-width="1.3" stroke-linejoin="round"/>
<path d="M20.4 371.6L34.6 371.6L34.6 385.8M34.6 371.6L38.6 365.8" fill="none" stroke="#7fd6a8" stroke-width="1.3"/>
<path d="M17 361.2L17 368.2M13.5 364.7L20.5 364.7" stroke="#4ed08a" stroke-width="1.8" fill="none"/>
<path d="M43 387.2L45.6 387.2L45.6 384.6Z" fill="#bdbdbd"/>
<rect x="668.9" y="4.0" width="76.2" height="18.5" fill="#2a2a2a" rx="3.5"/>
<path d="M675.4 18.2L675.4 8M673.2 10.4L675.4 7.6L677.6 10.4M675.4 18.2L685.6 18.2M683.2 16L686 18.2L683.2 20.4M675.4 18.2L682.6 11" stroke="#e0e0e0" stroke-width="1.1" fill="none" stroke-linejoin="round"/>
<circle cx="675.4" cy="18.2" r="1.7" fill="#e0e0e0"/>
<text x="694.4" y="17.3" fill="#e6e6e6" font-size="12" textLength="33.5" lengthAdjust="spacingAndGlyphs">Global</text>
<path d="M735.9 11.9L739.3 15.3L742.7 11.9" fill="none" stroke="#e0e0e0" stroke-width="1.3" stroke-linecap="round" stroke-linejoin="round"/>
<rect x="752.0" y="4.0" width="30.4" height="18.5" fill="#2a2a2a" rx="3.5"/>
<circle cx="762.2" cy="15.2" r="4" fill="none" stroke="#e0e0e0" stroke-width="1.3"/><circle cx="762.2" cy="15.2" r="1.3" fill="#e0e0e0"/>
<circle cx="767.2" cy="10.8" r="3.8" fill="#2a2a2a" stroke="#e0e0e0" stroke-width="1.3"/><circle cx="767.2" cy="10.8" r="1.3" fill="#e0e0e0"/>
<path d="M773.2 11.9L776.6 15.3L780.0 11.9" fill="none" stroke="#e0e0e0" stroke-width="1.3" stroke-linecap="round" stroke-linejoin="round"/>
<path d="M792.5 4L807.5 4L807.5 22.5L792.5 22.5Q789 22.5 789 19L789 7.5Q789 4 792.5 4Z" fill="#545454"/>
<path d="M808.3 4L835.5 4Q839 4 839 7.5L839 19Q839 22.5 835.5 22.5L808.3 22.5Z" fill="#2a2a2a"/>
<path d="M793.4 11.6L797 8.2Q800.6 5.4 803.4 8.6Q805.8 12 802.6 14.8L798.6 18.4L796.6 16.2L800.8 12.6Q802 11.2 801 10.2Q800 9.4 798.8 10.4L795.2 13.8Z" fill="none" stroke="#c9c9c9" stroke-width="1.1" stroke-linejoin="round"/>
<path d="M811.4 16L823.6 16M811.4 13.4L811.4 18.6M815.4 13.8L815.4 18.2M819.4 13.8L819.4 18.2M823.6 13.4L823.6 18.6" stroke="#e0e0e0" stroke-width="1.1" fill="none"/>
<rect x="821.2" y="6.4" width="3.6" height="3.4" fill="#e8e8e8"/>
<path d="M829.6 11.9L833.0 15.3L836.4 11.9" fill="none" stroke="#e0e0e0" stroke-width="1.3" stroke-linecap="round" stroke-linejoin="round"/>
<path d="M849.3 4L864.3 4L864.3 22.5L849.3 22.5Q845.8 22.5 845.8 19L845.8 7.5Q845.8 4 849.3 4Z" fill="#545454"/>
<path d="M865.1 4L892.4 4Q895.9 4 895.9 7.5L895.9 19Q895.9 22.5 892.4 22.5L865.1 22.5Z" fill="#2a2a2a"/>
<circle cx="855" cy="13.2" r="5.6" fill="none" stroke="#8a8a8a" stroke-width="1.1"/><circle cx="855" cy="13.2" r="2" fill="#e0e0e0"/>
<path d="M869.4 18.2Q869.8 9.4 875.8 9.4Q881.8 9.4 882.2 18.2" stroke="#c8c8c8" stroke-width="1.2" fill="none"/>
<path d="M886.4 11.9L889.8 15.3L893.2 11.9" fill="none" stroke="#5e5e5e" stroke-width="1.3" stroke-linecap="round" stroke-linejoin="round"/>
<rect x="1329.8" y="4.0" width="30.6" height="18.5" fill="#2a2a2a" rx="3.5"/>
<path d="M1336.4 11.2Q1341.6 5.4 1346.8 11.2Q1341.6 16.6 1336.4 11.2Z" fill="none" stroke="#e0e0e0" stroke-width="1.2"/><circle cx="1341.6" cy="10.8" r="1.9" fill="#e0e0e0"/>
<path d="M1332.6 13.2L1340.2 16.2L1336.8 17.2L1335.6 20.4Z" fill="#e0e0e0"/>
<path d="M1351.0 11.9L1354.4 15.3L1357.8 11.9" fill="none" stroke="#e0e0e0" stroke-width="1.3" stroke-linecap="round" stroke-linejoin="round"/>
<path d="M1370.5 4L1385 4L1385 22.5L1370.5 22.5Q1367 22.5 1367 19L1367 7.5Q1367 4 1370.5 4Z" fill="#4772b3"/>
<path d="M1385.8 4L1401.5 4Q1405 4 1405 7.5L1405 19Q1405 22.5 1401.5 22.5L1385.8 22.5Z" fill="#2a2a2a"/>
<path d="M1369.6 9.6Q1379 9.8 1381.4 19.8M1371.6 18.6L1382.4 7.6M1378.4 7.2L1382.8 7.2L1382.8 11.6" stroke="#f0f0f0" stroke-width="1.2" fill="none"/><circle cx="1371.2" cy="19" r="1.6" fill="#4772b3" stroke="#f0f0f0" stroke-width="1"/>
<path d="M1391.8 11.9L1395.2 15.3L1398.6 11.9" fill="none" stroke="#e0e0e0" stroke-width="1.3" stroke-linecap="round" stroke-linejoin="round"/>
<path d="M1415.3 4L1430.2 4L1430.2 22.5L1415.3 22.5Q1411.8 22.5 1411.8 19L1411.8 7.5Q1411.8 4 1415.3 4Z" fill="#4772b3"/>
<path d="M1431 4L1446.5 4Q1450 4 1450 7.5L1450 19Q1450 22.5 1446.5 22.5L1431 22.5Z" fill="#2a2a2a"/>
<circle cx="1418.8" cy="15.6" r="4.4" fill="none" stroke="#f0f0f0" stroke-width="1.2"/>
<circle cx="1422.4" cy="11.4" r="5" fill="#f0f0f0"/>
<path d="M1418.2 11.4A4.6 4.6 0 0 0 1422.6 16" stroke="#4772b3" stroke-width="1.1" fill="none"/>
<path d="M1436.8 11.9L1440.2 15.3L1443.6 11.9" fill="none" stroke="#e0e0e0" stroke-width="1.3" stroke-linecap="round" stroke-linejoin="round"/>
<rect x="1456.9" y="4.0" width="18.2" height="18.5" fill="#3c3c3c" rx="3.5" opacity="0.8"/>
<rect x="1459.6" y="9.4" width="9" height="9" fill="none" stroke="#6a6a6a" stroke-width="1.1" rx="1"/><path d="M1462.8 9.2L1462.8 6.6L1472 6.6L1472 15.6L1469 15.6" fill="none" stroke="#6a6a6a" stroke-width="1.1"/>
<clipPath id="shclip"><rect x="1481.8" y="4" width="95.4" height="18.5" rx="3.5"/></clipPath>
<g clip-path="url(#shclip)">
<rect x="1481.8" y="4.0" width="95.4" height="18.5" fill="#545454"/>
<rect x="1519.7" y="4.0" width="18.7" height="18.5" fill="#4772b3"/>
<rect x="1557.5" y="4.0" width="19.7" height="18.5" fill="#2a2a2a"/>
<rect x="1500.1" y="4.0" width="0.8" height="18.5" fill="#3a3a3a"/>
<rect x="1519.3" y="4.0" width="0.8" height="18.5" fill="#3a3a3a"/>
<rect x="1538.0" y="4.0" width="0.8" height="18.5" fill="#3a3a3a"/>
<rect x="1557.1" y="4.0" width="0.8" height="18.5" fill="#3a3a3a"/>
</g>
<g fill="none" stroke="#e4e4e4" stroke-width="1.1"><circle cx="1491" cy="13.2" r="6.4"/><ellipse cx="1491" cy="13.2" rx="2.6" ry="6.4"/><path d="M1484.6 13.2L1497.4 13.2M1486 9.4L1496 9.4M1486 17L1496 17"/></g>
<circle cx="1510" cy="13.2" r="6.8" fill="#c9c9c9"/>
<circle cx="1529" cy="13.2" r="6.4" fill="none" stroke="#f2f2f2" stroke-width="1.2"/><path d="M1529 6.8A6.4 6.4 0 0 0 1523.4 16.4L1529 13.2Z" fill="#f2f2f2"/><path d="M1523.4 16.4A6.4 6.4 0 0 0 1534.6 16.4L1529 13.2Z" fill="#f2f2f2" opacity="0.75"/>
<circle cx="1548" cy="13.2" r="6.4" fill="#3e3e3e" stroke="#d6d6d6" stroke-width="1.2"/><path d="M1543.8 10.8Q1545.4 8.2 1548 8" stroke="#f0f0f0" stroke-width="1.2" fill="none"/><path d="M1544 17.2Q1548 20.2 1552.6 16.6" stroke="#bdbdbd" stroke-width="1.6" fill="none" opacity="0.6"/>
<path d="M1564.0 11.9L1567.4 15.3L1570.8 11.9" fill="none" stroke="#e0e0e0" stroke-width="1.3" stroke-linecap="round" stroke-linejoin="round"/>
<rect x="1512.8" y="30.3" width="65.8" height="18.0" fill="#2a2a2a" rx="3.5"/>
<text x="1520.4" y="43.4" fill="#e6e6e6" font-size="12" textLength="41.2" lengthAdjust="spacingAndGlyphs">Options</text>
<path d="M1568.8 37.9L1572.2 41.3L1575.6 37.9" fill="none" stroke="#e0e0e0" stroke-width="1.3" stroke-linecap="round" stroke-linejoin="round"/>
<path d="M1534.6 102.1L1534.6 79" stroke="#2f84e3" stroke-width="2.2"/>
<path d="M1534.6 102.1L1567.1 102.1" stroke="#77a81f" stroke-width="2.2"/>
<path d="M1534.6 102.1L1534.6 124.5" stroke="#f03752" stroke-width="2.2"/>
<circle cx="1502.9" cy="102.1" r="7.4" fill="#4c5f2b" stroke="#77a81f" stroke-width="1.6"/>
<circle cx="1534.6" cy="79" r="8.6" fill="#2f84e3"/>
<circle cx="1567.1" cy="102.1" r="8.6" fill="#77a81f"/>
<circle cx="1534.6" cy="124.5" r="8.6" fill="#f03752"/>
<text x="1534.6" y="83.2" text-anchor="middle" font-size="11.5" fill="#0a1a30" style="fill:#0a1a30">Z</text>
<text x="1567.1" y="106.3" text-anchor="middle" font-size="11.5" style="fill:#14200a">Y</text>
<text x="1534.6" y="128.7" text-anchor="middle" font-size="11.5" style="fill:#300a10">X</text>
<circle cx="1562.9" cy="156.9" r="13.4" fill="#2c2c2c" opacity="0.85"/>
<circle cx="1562.9" cy="186.9" r="13.4" fill="#2c2c2c" opacity="0.85"/>
<circle cx="1562.9" cy="217.2" r="13.4" fill="#2c2c2c" opacity="0.85"/>
<circle cx="1562.9" cy="246.7" r="13.4" fill="#2c2c2c" opacity="0.85"/>
<circle cx="1564.8" cy="155" r="5.6" fill="#e6e6e6"/><path d="M1560.6 159.4L1555.8 164" stroke="#e6e6e6" stroke-width="2.6" stroke-linecap="round"/><path d="M1562 155L1567.6 155M1564.8 152.2L1564.8 157.8" stroke="#2c2c2c" stroke-width="1.1"/>
<path d="M1557.4 186.6Q1556 184.4 1557.4 183.6Q1558.8 183.4 1559.8 185.4L1559.4 180Q1559.6 178.6 1560.8 178.8Q1561.8 179 1561.8 180.2L1562 178.4Q1562.4 177.2 1563.4 177.4Q1564.4 177.6 1564.4 178.8L1564.6 179.4Q1565 178.2 1566 178.4Q1567 178.8 1566.8 180L1567 181.4Q1567.6 180.4 1568.4 180.8Q1569.2 181.2 1569 182.4L1568.4 189.6Q1567.8 193.8 1564.6 194.2Q1561 194.4 1559.6 191.2Z" fill="#e8e8e8"/>
<g fill="none" stroke="#e6e6e6" stroke-width="1.2"><circle cx="1559.6" cy="213.2" r="3"/><circle cx="1566.4" cy="212.4" r="3.6"/></g><circle cx="1566.4" cy="212.4" r="1.2" fill="#e6e6e6"/>
<path d="M1559.4 211.8L1559.4 214.6M1558 213.2L1560.8 213.2" stroke="#e6e6e6" stroke-width="0.9"/>
<rect x="1559" y="218.6" width="7.4" height="5.8" rx="0.8" fill="#e6e6e6"/><path d="M1567.6 221.4L1570.8 219L1570.8 224Z M1556.2 220L1558.2 220L1558.2 223L1556.2 223Z" fill="#e6e6e6"/>
<rect x="1555.6" y="239.4" width="14.6" height="14.6" fill="none" stroke="#e6e6e6" stroke-width="1.3"/><path d="M1560.5 239.4L1560.5 254M1565.4 239.4L1565.4 254M1555.6 244.3L1570.2 244.3M1555.6 249.2L1570.2 249.2" stroke="#e6e6e6" stroke-width="1.2"/>
<path d="M1581 67.6L1586 67.6L1586 80.8L1581 80.8Q1577.6 80.8 1577.6 77.4L1577.6 71Q1577.6 67.6 1581 67.6Z" fill="#333" opacity="0.9"/>
<path d="M1583.6 70.8L1580.4 74.2L1583.6 77.6" stroke="#d0d0d0" stroke-width="1.2" fill="none"/>
<path d="M0 0L1586 0L1586 935L0 935Z M5.5 1.2Q1 1.2 1 5.5L1 929Q1 933.8 5.5 933.8L1579.7 933.8Q1584.7 933.8 1584.7 929L1584.7 6Q1584.7 1.2 1579.7 1.2Z" fill="#1a1a1a" fill-rule="evenodd"/>
</svg>
</body></html>
